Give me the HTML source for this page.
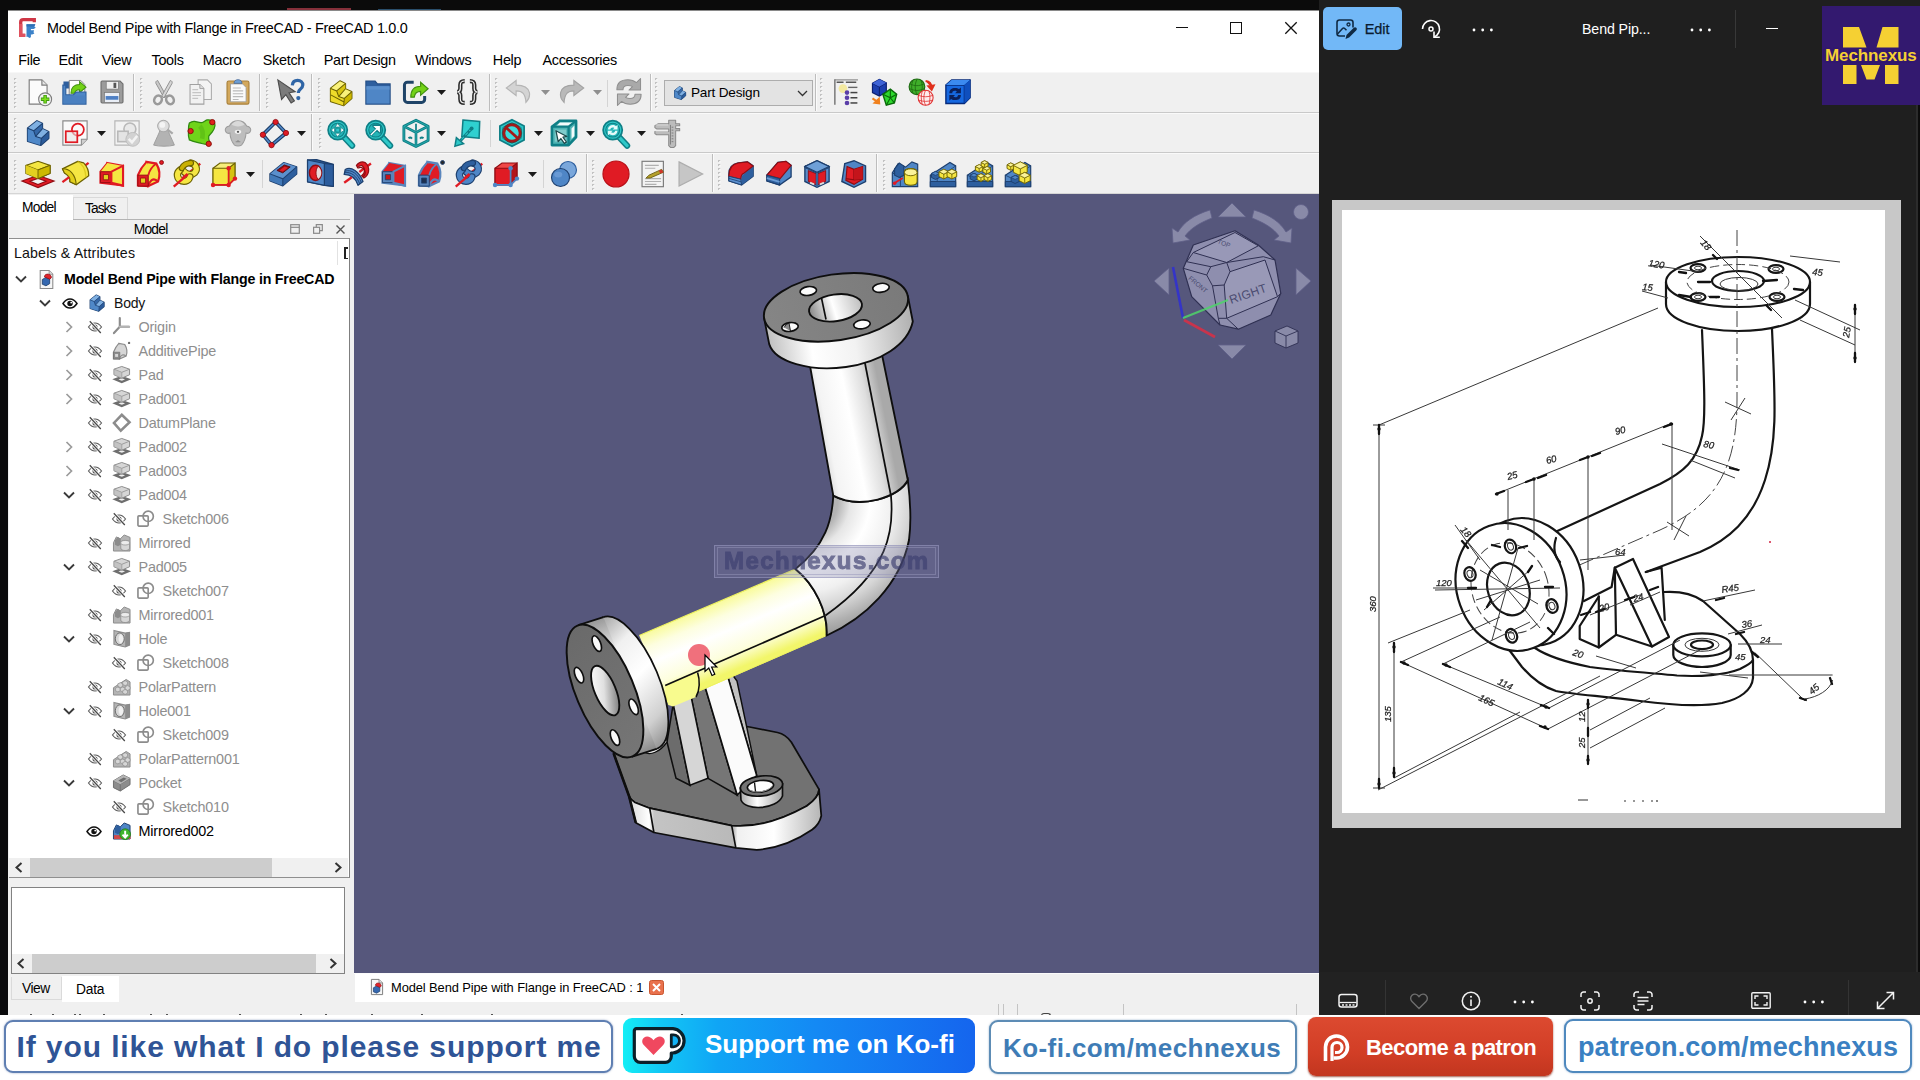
<!DOCTYPE html>
<html><head><meta charset="utf-8"><title>FreeCAD</title><style>
*{box-sizing:border-box;margin:0;padding:0}
html,body{width:1920px;height:1080px;overflow:hidden;background:#000}
body{font-family:"Liberation Sans",sans-serif;font-size:13.8px;color:#000;position:relative}
.a{position:absolute}
.t{position:absolute;white-space:nowrap;line-height:1}
svg{position:absolute;overflow:visible}
</style></head><body>
<div class="a" style="left:0px;top:0px;width:1319px;height:10px;background:#0b0b0b"></div>
<div class="a" style="left:287px;top:8px;width:64px;height:2.5px;background:#85303a"></div>
<div class="a" style="left:378px;top:8.5px;width:63px;height:2px;background:#2a4f6c"></div>
<div class="a" style="left:0px;top:10px;width:8px;height:1005px;background:#0a0a0c"></div>
<div class="a" style="left:8px;top:10px;width:1311px;height:1006px;background:#f0f0f0"></div>
<div class="a" style="left:8px;top:10px;width:1311px;height:1px;background:#8a8a8a"></div>
<div class="a" style="left:8px;top:11px;width:1311px;height:61px;background:#fff"></div>
<div class="a" style="left:8px;top:72px;width:1311px;height:1px;background:#f7f7f7"></div>
<div class="a" style="left:8px;top:112px;width:1311px;height:1px;background:#c9c9c9"></div>
<div class="a" style="left:8px;top:113px;width:1311px;height:1px;background:#fafafa"></div>
<div class="a" style="left:8px;top:152px;width:1311px;height:1px;background:#c9c9c9"></div>
<div class="a" style="left:8px;top:153px;width:1311px;height:1px;background:#fafafa"></div>
<div class="a" style="left:8px;top:193px;width:1311px;height:1px;background:#d5d5d5"></div>
<div class="t" style="left:47px;top:21px;font-size:14.4px;color:#000;font-weight:400;letter-spacing:-0.27px">Model Bend Pipe with Flange in FreeCAD - FreeCAD 1.0.0</div>
<svg style="left:18px;top:17px" width="20" height="21" viewBox="0 0 20 21"><path d="M16.300 5.200V2.600H5.200Q2.700 2.600 2.700 5.100V18.400H7.300" fill="none" stroke="#cf3746" stroke-width="3.300"/><path d="M2.700 7v11.400h4.500" fill="none" stroke="#e0525f" stroke-width="3.300"/><path d="M8.500 7.300h8.800l-1 2.200 1.500 1.200-2.200 1.300h-2.700v1.300h3.200l-.6 2 .9 1.300-2.300.9h-1.200v2.700l-1.700.8-1.300-1.200-1.400.3z" fill="#3b82c9"/><path d="M8.500 7.300h8.800l-1 2.200h-7.800z" fill="#2f6fb3"/></svg>
<div class="a" style="left:1176px;top:27px;width:12px;height:1.3px;background:#111"></div>
<div class="a" style="left:1230px;top:22px;width:12px;height:11.5px;border:1.4px solid #111"></div>
<svg style="left:1285px;top:22px" width="12" height="12" viewBox="0 0 12 12"><path d="M0.3 0.3L11.7 11.7M11.7 0.3L0.3 11.7" stroke="#111" stroke-width="1.3" fill="none"/></svg>
<div class="t" style="left:18.3px;top:52.6px;font-size:14.4px;color:#000;font-weight:400;letter-spacing:-0.3px">File</div>
<div class="t" style="left:58.5px;top:52.6px;font-size:14.4px;color:#000;font-weight:400;letter-spacing:-0.3px">Edit</div>
<div class="t" style="left:101.7px;top:52.6px;font-size:14.4px;color:#000;font-weight:400;letter-spacing:-0.3px">View</div>
<div class="t" style="left:151.5px;top:52.6px;font-size:14.4px;color:#000;font-weight:400;letter-spacing:-0.3px">Tools</div>
<div class="t" style="left:202.8px;top:52.6px;font-size:14.4px;color:#000;font-weight:400;letter-spacing:-0.3px">Macro</div>
<div class="t" style="left:262.8px;top:52.6px;font-size:14.4px;color:#000;font-weight:400;letter-spacing:-0.3px">Sketch</div>
<div class="t" style="left:323.8px;top:52.6px;font-size:14.4px;color:#000;font-weight:400;letter-spacing:-0.3px">Part Design</div>
<div class="t" style="left:415px;top:52.6px;font-size:14.4px;color:#000;font-weight:400;letter-spacing:-0.3px">Windows</div>
<div class="t" style="left:492.8px;top:52.6px;font-size:14.4px;color:#000;font-weight:400;letter-spacing:-0.3px">Help</div>
<div class="t" style="left:542.5px;top:52.6px;font-size:14.4px;color:#000;font-weight:400;letter-spacing:-0.3px">Accessories</div>
<svg style="left:14px;top:78px" width="4" height="30"><rect x="0" y="0" width="2.200" height="2" fill="#c2c2c2"/><rect x="1.200" y="1" width="1.500" height="1.500" fill="#fdfdfd"/><rect x="0" y="4" width="2.200" height="2" fill="#c2c2c2"/><rect x="1.200" y="5" width="1.500" height="1.500" fill="#fdfdfd"/><rect x="0" y="8" width="2.200" height="2" fill="#c2c2c2"/><rect x="1.200" y="9" width="1.500" height="1.500" fill="#fdfdfd"/><rect x="0" y="12" width="2.200" height="2" fill="#c2c2c2"/><rect x="1.200" y="13" width="1.500" height="1.500" fill="#fdfdfd"/><rect x="0" y="16" width="2.200" height="2" fill="#c2c2c2"/><rect x="1.200" y="17" width="1.500" height="1.500" fill="#fdfdfd"/><rect x="0" y="20" width="2.200" height="2" fill="#c2c2c2"/><rect x="1.200" y="21" width="1.500" height="1.500" fill="#fdfdfd"/><rect x="0" y="24" width="2.200" height="2" fill="#c2c2c2"/><rect x="1.200" y="25" width="1.500" height="1.500" fill="#fdfdfd"/><rect x="0" y="28" width="2.200" height="2" fill="#c2c2c2"/><rect x="1.200" y="29" width="1.500" height="1.500" fill="#fdfdfd"/></svg>
<svg style="left:140px;top:78px" width="4" height="30"><rect x="0" y="0" width="2.200" height="2" fill="#c2c2c2"/><rect x="1.200" y="1" width="1.500" height="1.500" fill="#fdfdfd"/><rect x="0" y="4" width="2.200" height="2" fill="#c2c2c2"/><rect x="1.200" y="5" width="1.500" height="1.500" fill="#fdfdfd"/><rect x="0" y="8" width="2.200" height="2" fill="#c2c2c2"/><rect x="1.200" y="9" width="1.500" height="1.500" fill="#fdfdfd"/><rect x="0" y="12" width="2.200" height="2" fill="#c2c2c2"/><rect x="1.200" y="13" width="1.500" height="1.500" fill="#fdfdfd"/><rect x="0" y="16" width="2.200" height="2" fill="#c2c2c2"/><rect x="1.200" y="17" width="1.500" height="1.500" fill="#fdfdfd"/><rect x="0" y="20" width="2.200" height="2" fill="#c2c2c2"/><rect x="1.200" y="21" width="1.500" height="1.500" fill="#fdfdfd"/><rect x="0" y="24" width="2.200" height="2" fill="#c2c2c2"/><rect x="1.200" y="25" width="1.500" height="1.500" fill="#fdfdfd"/><rect x="0" y="28" width="2.200" height="2" fill="#c2c2c2"/><rect x="1.200" y="29" width="1.500" height="1.500" fill="#fdfdfd"/></svg>
<svg style="left:266px;top:78px" width="4" height="30"><rect x="0" y="0" width="2.200" height="2" fill="#c2c2c2"/><rect x="1.200" y="1" width="1.500" height="1.500" fill="#fdfdfd"/><rect x="0" y="4" width="2.200" height="2" fill="#c2c2c2"/><rect x="1.200" y="5" width="1.500" height="1.500" fill="#fdfdfd"/><rect x="0" y="8" width="2.200" height="2" fill="#c2c2c2"/><rect x="1.200" y="9" width="1.500" height="1.500" fill="#fdfdfd"/><rect x="0" y="12" width="2.200" height="2" fill="#c2c2c2"/><rect x="1.200" y="13" width="1.500" height="1.500" fill="#fdfdfd"/><rect x="0" y="16" width="2.200" height="2" fill="#c2c2c2"/><rect x="1.200" y="17" width="1.500" height="1.500" fill="#fdfdfd"/><rect x="0" y="20" width="2.200" height="2" fill="#c2c2c2"/><rect x="1.200" y="21" width="1.500" height="1.500" fill="#fdfdfd"/><rect x="0" y="24" width="2.200" height="2" fill="#c2c2c2"/><rect x="1.200" y="25" width="1.500" height="1.500" fill="#fdfdfd"/><rect x="0" y="28" width="2.200" height="2" fill="#c2c2c2"/><rect x="1.200" y="29" width="1.500" height="1.500" fill="#fdfdfd"/></svg>
<svg style="left:318px;top:78px" width="4" height="30"><rect x="0" y="0" width="2.200" height="2" fill="#c2c2c2"/><rect x="1.200" y="1" width="1.500" height="1.500" fill="#fdfdfd"/><rect x="0" y="4" width="2.200" height="2" fill="#c2c2c2"/><rect x="1.200" y="5" width="1.500" height="1.500" fill="#fdfdfd"/><rect x="0" y="8" width="2.200" height="2" fill="#c2c2c2"/><rect x="1.200" y="9" width="1.500" height="1.500" fill="#fdfdfd"/><rect x="0" y="12" width="2.200" height="2" fill="#c2c2c2"/><rect x="1.200" y="13" width="1.500" height="1.500" fill="#fdfdfd"/><rect x="0" y="16" width="2.200" height="2" fill="#c2c2c2"/><rect x="1.200" y="17" width="1.500" height="1.500" fill="#fdfdfd"/><rect x="0" y="20" width="2.200" height="2" fill="#c2c2c2"/><rect x="1.200" y="21" width="1.500" height="1.500" fill="#fdfdfd"/><rect x="0" y="24" width="2.200" height="2" fill="#c2c2c2"/><rect x="1.200" y="25" width="1.500" height="1.500" fill="#fdfdfd"/><rect x="0" y="28" width="2.200" height="2" fill="#c2c2c2"/><rect x="1.200" y="29" width="1.500" height="1.500" fill="#fdfdfd"/></svg>
<svg style="left:495px;top:78px" width="4" height="30"><rect x="0" y="0" width="2.200" height="2" fill="#c2c2c2"/><rect x="1.200" y="1" width="1.500" height="1.500" fill="#fdfdfd"/><rect x="0" y="4" width="2.200" height="2" fill="#c2c2c2"/><rect x="1.200" y="5" width="1.500" height="1.500" fill="#fdfdfd"/><rect x="0" y="8" width="2.200" height="2" fill="#c2c2c2"/><rect x="1.200" y="9" width="1.500" height="1.500" fill="#fdfdfd"/><rect x="0" y="12" width="2.200" height="2" fill="#c2c2c2"/><rect x="1.200" y="13" width="1.500" height="1.500" fill="#fdfdfd"/><rect x="0" y="16" width="2.200" height="2" fill="#c2c2c2"/><rect x="1.200" y="17" width="1.500" height="1.500" fill="#fdfdfd"/><rect x="0" y="20" width="2.200" height="2" fill="#c2c2c2"/><rect x="1.200" y="21" width="1.500" height="1.500" fill="#fdfdfd"/><rect x="0" y="24" width="2.200" height="2" fill="#c2c2c2"/><rect x="1.200" y="25" width="1.500" height="1.500" fill="#fdfdfd"/><rect x="0" y="28" width="2.200" height="2" fill="#c2c2c2"/><rect x="1.200" y="29" width="1.500" height="1.500" fill="#fdfdfd"/></svg>
<svg style="left:655px;top:78px" width="4" height="30"><rect x="0" y="0" width="2.200" height="2" fill="#c2c2c2"/><rect x="1.200" y="1" width="1.500" height="1.500" fill="#fdfdfd"/><rect x="0" y="4" width="2.200" height="2" fill="#c2c2c2"/><rect x="1.200" y="5" width="1.500" height="1.500" fill="#fdfdfd"/><rect x="0" y="8" width="2.200" height="2" fill="#c2c2c2"/><rect x="1.200" y="9" width="1.500" height="1.500" fill="#fdfdfd"/><rect x="0" y="12" width="2.200" height="2" fill="#c2c2c2"/><rect x="1.200" y="13" width="1.500" height="1.500" fill="#fdfdfd"/><rect x="0" y="16" width="2.200" height="2" fill="#c2c2c2"/><rect x="1.200" y="17" width="1.500" height="1.500" fill="#fdfdfd"/><rect x="0" y="20" width="2.200" height="2" fill="#c2c2c2"/><rect x="1.200" y="21" width="1.500" height="1.500" fill="#fdfdfd"/><rect x="0" y="24" width="2.200" height="2" fill="#c2c2c2"/><rect x="1.200" y="25" width="1.500" height="1.500" fill="#fdfdfd"/><rect x="0" y="28" width="2.200" height="2" fill="#c2c2c2"/><rect x="1.200" y="29" width="1.500" height="1.500" fill="#fdfdfd"/></svg>
<svg style="left:820px;top:78px" width="4" height="30"><rect x="0" y="0" width="2.200" height="2" fill="#c2c2c2"/><rect x="1.200" y="1" width="1.500" height="1.500" fill="#fdfdfd"/><rect x="0" y="4" width="2.200" height="2" fill="#c2c2c2"/><rect x="1.200" y="5" width="1.500" height="1.500" fill="#fdfdfd"/><rect x="0" y="8" width="2.200" height="2" fill="#c2c2c2"/><rect x="1.200" y="9" width="1.500" height="1.500" fill="#fdfdfd"/><rect x="0" y="12" width="2.200" height="2" fill="#c2c2c2"/><rect x="1.200" y="13" width="1.500" height="1.500" fill="#fdfdfd"/><rect x="0" y="16" width="2.200" height="2" fill="#c2c2c2"/><rect x="1.200" y="17" width="1.500" height="1.500" fill="#fdfdfd"/><rect x="0" y="20" width="2.200" height="2" fill="#c2c2c2"/><rect x="1.200" y="21" width="1.500" height="1.500" fill="#fdfdfd"/><rect x="0" y="24" width="2.200" height="2" fill="#c2c2c2"/><rect x="1.200" y="25" width="1.500" height="1.500" fill="#fdfdfd"/><rect x="0" y="28" width="2.200" height="2" fill="#c2c2c2"/><rect x="1.200" y="29" width="1.500" height="1.500" fill="#fdfdfd"/></svg>
<div class="a" style="left:133px;top:74px;width:1px;height:37px;background:#bdbdbd"></div><div class="a" style="left:134px;top:74px;width:1px;height:37px;background:#fbfbfb"></div>
<div class="a" style="left:259px;top:74px;width:1px;height:37px;background:#bdbdbd"></div><div class="a" style="left:260px;top:74px;width:1px;height:37px;background:#fbfbfb"></div>
<div class="a" style="left:311px;top:74px;width:1px;height:37px;background:#bdbdbd"></div><div class="a" style="left:312px;top:74px;width:1px;height:37px;background:#fbfbfb"></div>
<div class="a" style="left:489px;top:74px;width:1px;height:37px;background:#bdbdbd"></div><div class="a" style="left:490px;top:74px;width:1px;height:37px;background:#fbfbfb"></div>
<div class="a" style="left:650px;top:74px;width:1px;height:37px;background:#bdbdbd"></div><div class="a" style="left:651px;top:74px;width:1px;height:37px;background:#fbfbfb"></div>
<div class="a" style="left:815px;top:74px;width:1px;height:37px;background:#bdbdbd"></div><div class="a" style="left:816px;top:74px;width:1px;height:37px;background:#fbfbfb"></div>
<div class="a" style="left:607px;top:80px;width:1px;height:27px;background:#d4d4d4"></div>
<svg style="left:24.0px;top:77.4px" width="30" height="30" viewBox="0 0 26 26"><path d="M4.5 2.5h11l4.5 4.5v16.5h-15.5z" fill="#fbfbfb" stroke="#7d7d7d" stroke-width="1"/>
<path d="M15.5 2.5v4.5h4.5" fill="#e4e4e4" stroke="#7d7d7d" stroke-width="1"/>
<circle cx="18.3" cy="19.3" r="5.6" fill="#f4f4f4" stroke="#7d7d7d" stroke-width="1"/>
<path d="M18.3 15.6v7.4M14.6 19.3h7.4" stroke="#3f9a10" stroke-width="3"/><path d="M18.3 16.2v6.2M15.2 19.3h6.2" stroke="#7fe01e" stroke-width="1.4"/></svg>
<svg style="left:60.0px;top:77.4px" width="30" height="30" viewBox="0 0 26 26"><path d="M3 4h6l1.5 2v4h-7.5z" fill="#2e5f9e"/>
<path d="M8 3h10l3.5 3.5v10h-13.5z" fill="#fdfdfd" stroke="#7d7d7d" stroke-width=".8"/>
<path d="M9.5 14c0-5 3-7.5 7.5-7.5v-2.5l5.5 4.8-5.5 4.8v-2.6c-2.5 0-4 1-4.3 3z" fill="#73d216" stroke="#3f8f0d" stroke-width=".9"/>
<path d="M2.5 7v16.5h20v-10.5h-8.5l-2.5 2.5h-6.5v-8.5z" fill="#4f86c6" stroke="#2e5f9e" stroke-width="1"/>
<path d="M3 16h19v7h-19z" fill="#4a80c0"/></svg>
<svg style="left:97.0px;top:77.4px" width="30" height="30" viewBox="0 0 26 26"><path d="M3.5 4.5a1 1 0 0 1 1-1h15.5l2.5 2.5v15.5a1 1 0 0 1-1 1h-17a1 1 0 0 1-1-1z" fill="#9b9b9b" stroke="#6e6e6e" stroke-width="1"/>
<rect x="8" y="4" width="10.5" height="6.5" fill="#efefef" stroke="#777" stroke-width=".6"/><rect x="14.3" y="5" width="2.4" height="4.5" fill="#555"/>
<rect x="6.5" y="13.5" width="13" height="8.5" fill="#e9eef6" stroke="#777" stroke-width=".6"/>
<rect x="7.5" y="16.5" width="11" height="3.2" fill="#4d7fc4"/></svg>
<svg style="left:149.0px;top:77.4px" width="30" height="30" viewBox="0 0 26 26"><path d="M7.5 3l7.5 13.5-2 1.5-7-12.5c-.4-1.2.2-2.2 1.5-2.500z" fill="#c9c9c9" stroke="#8c8c8c" stroke-width=".8"/>
<path d="M18.500 3l-7.500 13.500 2 1.500 7-12.500c.4-1.200-.2-2.200-1.500-2.500z" fill="#d6d6d6" stroke="#8c8c8c" stroke-width=".8"/>
<ellipse cx="7.800" cy="19.800" rx="3.200" ry="3.800" transform="rotate(25 7.800 19.800)" fill="none" stroke="#9a9a9a" stroke-width="2.200"/>
<ellipse cx="18.200" cy="19.800" rx="3.200" ry="3.800" transform="rotate(-25 18.200 19.800)" fill="none" stroke="#9a9a9a" stroke-width="2.200"/></svg>
<svg style="left:186.0px;top:77.4px" width="30" height="30" viewBox="0 0 26 26"><path d="M10.500 2.500h8l3.500 3.500v13.500h-11.500z" fill="#f4f4f4" stroke="#ababab" stroke-width=".9"/>
<path d="M3.500 6.500h8.500l3.500 3.500v13.500h-12z" fill="#f1f1f1" stroke="#a0a0a0" stroke-width=".9"/><path d="M12 6.500v3.500h3.500" fill="#ddd" stroke="#a0a0a0" stroke-width=".8"/>
<path d="M5.500 11h5M5.500 13.500h7.500M5.500 16h7.500M5.500 18.500h5" stroke="#c5c5c5" stroke-width="1"/></svg>
<svg style="left:223.0px;top:77.4px" width="30" height="30" viewBox="0 0 26 26"><rect x="3.500" y="3.500" width="19" height="20" rx="1.500" fill="#d3a85c" stroke="#a9803a" stroke-width="1"/>
<path d="M6.500 6h10.500l3 3v12.500h-13.500z" fill="#fafafa" stroke="#9c9c9c" stroke-width=".7"/>
<path d="M9.500 5.500c0-2 1.500-3.200 3.500-3.200s3.500 1.200 3.500 3.200z" fill="#6d9fd6" stroke="#46699a" stroke-width=".7"/>
<path d="M8.500 9.500h7M8.500 12h9M8.500 14.500h9M8.500 17h9M8.500 19.500h5" stroke="#b9b9b9" stroke-width="1"/></svg>
<svg style="left:275.0px;top:77.4px" width="30" height="30" viewBox="0 0 26 26"><path d="M2.500 2.500l3.200 17 3.700-4.200 4.600 7.200 2.800-1.800-4.600-7 5.300-1z" fill="#7b7b7b" stroke="#4c4c4c" stroke-width="1"/>
<path d="M15 7.200c.3-2.800 2.300-4.200 4.600-4.200 2.600 0 4.500 1.600 4.500 4 0 2-1.200 2.900-2.400 3.800-1 .8-1.500 1.400-1.500 3" fill="none" stroke="#2f65a6" stroke-width="2.800"/>
<circle cx="20.200" cy="18.300" r="1.800" fill="#2f65a6"/></svg>
<svg style="left:326.0px;top:77.4px" width="30" height="30" viewBox="0 0 26 26"><g transform="translate(0 1)"><path d="M4.100 8.900L12.100 2.600 16.700 4.800V9.400L22.200 11.900V17.600L15.300 23.600 4.100 20.100z" fill="#f5e642" stroke="#6b6000" stroke-width="1.500" stroke-linejoin="round"/>
<path d="M4.100 8.900L12.100 2.600 16.700 4.800 9.300 11.100z" fill="#f9f17a"/><path d="M9.300 11.100L16.700 4.800V9.400L11 16z" fill="#d9c510"/>
<path d="M11 16L16.700 9.400 22.200 11.900 15.900 17.600z" fill="#f9f17a"/><path d="M15.900 17.600L22.200 11.900V17.600L15.300 23.600z" fill="#cdb800"/>
<path d="M4.100 8.900L9.300 11.100 11 16 15.900 17.600 15.300 23.600 4.100 20.100z" fill="#eedb2a"/>
<path d="M4.100 8.900L9.300 11.100 11 16 15.900 17.600 22.200 11.900M9.300 11.100L16.700 4.800M11 16L16.700 9.400M15.900 17.600L15.300 23.600M4.100 14.500L15.600 20.600" fill="none" stroke="#6b6000" stroke-width=".9" stroke-linejoin="round"/></g></svg>
<svg style="left:363.0px;top:77.4px" width="30" height="30" viewBox="0 0 26 26"><path d="M2.500 3.500h8l2 2.500h11v17.500h-21z" fill="#2e5f9e" stroke="#254f86" stroke-width="1"/>
<path d="M3 8h20v15h-20z" fill="#4f86c6"/><path d="M3 8h20v3h-20z" fill="#5b90cd"/></svg>
<svg style="left:401.0px;top:77.4px" width="30" height="30" viewBox="0 0 26 26"><path d="M11 4.500h-5.500a2.500 2.500 0 0 0-2.500 2.500v12.500a2.500 2.500 0 0 0 2.500 2.500h12.500a2.500 2.500 0 0 0 2.500-2.500v-3" fill="none" stroke="#1f4468" stroke-width="2.600"/>
<path d="M8.500 17.500c0-6 3.200-9.500 8.500-9.500v-3.500l6.500 5.700-6.500 5.700v-3.500c-3.200 0-5 1.300-5.500 5.100z" fill="#73d216" stroke="#3f8f0d" stroke-width="1"/></svg>
<svg style="left:452.0px;top:77.4px" width="30" height="30" viewBox="0 0 26 26"><path d="M11 3.500c-3 0-3.800 1-3.800 3.500v3c0 1.800-.8 2.700-2.400 3 1.600.3 2.400 1.200 2.400 3v3c0 2.500.8 3.500 3.800 3.500M15.500 3.500c3 0 3.800 1 3.800 3.500v3c0 1.800.8 2.700 2.400 3-1.600.3-2.400 1.200-2.400 3v3c0 2.500-.8 3.500-3.800 3.500" fill="none" stroke="#2b2b2b" stroke-width="3.700"/><path d="M11 3.500c-3 0-3.800 1-3.800 3.500v3c0 1.800-.8 2.700-2.400 3 1.600.3 2.400 1.200 2.400 3v3c0 2.500.8 3.500 3.800 3.500M15.500 3.500c3 0 3.800 1 3.800 3.500v3c0 1.800.8 2.700 2.400 3-1.600.3-2.400 1.200-2.400 3v3c0 2.500-.8 3.500-3.800 3.500" fill="none" stroke="#f4f4f4" stroke-width="1"/></svg>
<svg style="left:504.0px;top:77.4px" width="30" height="30" viewBox="0 0 26 26"><path d="M10.500 3l-8.500 6.500 8.500 6.500v-4c5.500 0 8 2.500 8.500 10 3-3 3.500-6 3-8.500-1-4.500-5-6.500-11.500-6.500z" fill="#d4d4d4" stroke="#b5b5b5" stroke-width="1"/></svg>
<svg style="left:556.0px;top:77.4px" width="30" height="30" viewBox="0 0 26 26"><path d="M15.500 3l8.500 6.500-8.500 6.500v-4c-5.500 0-8 2.500-8.500 10-3-3-3.500-6-3-8.500 1-4.500 5-6.500 11.500-6.500z" fill="#b9b9b9" stroke="#a3a3a3" stroke-width="1"/></svg>
<svg style="left:614.0px;top:77.4px" width="30" height="30" viewBox="0 0 26 26"><path d="M2.500 11C2.500 5.300 6.300 2.400 12 2.400 15 2.400 17.500 3.200 19.400 4.800L23 1.300V11.300H13L16 8.300C15 7.600 13.700 7.300 12 7.300 9.300 7.300 7.800 8.600 7.800 11Z" fill="#a9a9a9" stroke="#8f8f8f" stroke-width=".9" stroke-linejoin="round"/><path d="M2.500 11C2.500 5.300 6.300 2.400 12 2.400 15 2.400 17.500 3.200 19.400 4.800L23 1.300V11.300H13L16 8.300C15 7.600 13.700 7.300 12 7.300 9.300 7.300 7.800 8.600 7.800 11Z" transform="rotate(180 13 13)" fill="#b9b9b9" stroke="#8f8f8f" stroke-width=".9" stroke-linejoin="round"/></svg>
<svg style="left:832.0px;top:77.4px" width="30" height="30" viewBox="0 0 26 26"><path d="M2.500 2v22" stroke="#555" stroke-width="1"/><path d="M2.500 2.500h20" stroke="#888" stroke-width="1"/>
<path d="M4 4.500h6M12 4.500h9" stroke="#555" stroke-width="1.200"/>
<circle cx="9.500" cy="10" r="3.800" fill="#f3e9a0"/><path d="M14 9h8" stroke="#666" stroke-width="1.200"/>
<circle cx="13" cy="13.500" r="2" fill="#5a3ea8"/><path d="M16 13.500h6" stroke="#444" stroke-width="1.300"/>
<circle cx="13" cy="18" r="2" fill="#5a3ea8"/><path d="M16 18h6" stroke="#444" stroke-width="1.300"/>
<circle cx="13" cy="22.500" r="2" fill="#5a3ea8"/><path d="M16 22.500h6" stroke="#444" stroke-width="1.300"/></svg>
<svg style="left:869.0px;top:77.4px" width="30" height="30" viewBox="0 0 26 26"><path d="M3 5.500l6-3.500 6 3 0 8-6 3.500-6-3z" fill="#1c3fb0" stroke="#0b1f70" stroke-width="1"/><path d="M3 5.500l6 3 6-3.500M9 8.500v8" fill="none" stroke="#0b1f70" stroke-width=".9"/><path d="M3 5.500l6-3.500 6 3-6 3.500z" fill="#3e63d6"/>
<path d="M12 15l6.500-4.500 5.500 4.500-2 7.500-7 2z" fill="#2fd82f" stroke="#0a6a0a" stroke-width="1.200"/><path d="M12 15l6.500 3 5.500-3M18.500 18l-3.500 6.500M18.500 18l3.500 4.500M18.500 10.500v7.500" fill="none" stroke="#0a6a0a" stroke-width="1"/>
<path d="M3 18.500l5 3.500M8.500 19l.3 3.800-3.800-.5z" stroke="#f0801c" stroke-width="1.800" fill="#f0801c"/></svg>
<svg style="left:906.0px;top:77.4px" width="30" height="30" viewBox="0 0 26 26"><circle cx="9.500" cy="8.500" r="6.800" fill="#3fae2a" stroke="#1e6a12" stroke-width="1"/><path d="M3.500 6c4 2 8 2 12 0M3 10c4.500 2.200 8.500 2.200 13 0M9.500 2c-2 4-2 9 0 13M6 3c-1.500 3.500-1.500 7.500 0 11M13 3c1.500 3.500 1.500 7.500 0 11" fill="none" stroke="#1e6a12" stroke-width=".7"/>
<circle cx="17" cy="18" r="6.500" fill="#fdecec" stroke="#e03030" stroke-width=".9"/><path d="M11 16c4 1.500 8 1.500 12 0M10.800 20c4.200 1.500 8.200 1.500 12.400 0M17 11.500c-2 4-2 9 0 13M14 12.500c-1 3.500-1 7.500 0 11M20 12.500c1 3.500 1 7.500 0 11" fill="none" stroke="#e03030" stroke-width=".7"/>
<path d="M17 3.500c3.500.5 5 2.500 5 5.500M19.500 8l2.700 3 1.800-3.600z" fill="#e0301c" stroke="#e0301c" stroke-width="1.800"/></svg>
<svg style="left:943.0px;top:77.4px" width="30" height="30" viewBox="0 0 26 26"><path d="M2.500 7l5-4.500h16v15.500l-5 5h-16z" fill="#1668e0" stroke="#062a7a" stroke-width="1.200"/>
<path d="M2.500 7h16v16M18.500 7l5-4.500" fill="none" stroke="#062a7a" stroke-width="1.100"/><path d="M2.500 7l5-4.500h16l-5 4.500z" fill="#3b8af0"/><path d="M18.500 7l5-4.500v15.500l-5 5z" fill="#0f4fbe"/>
<path d="M5.500 14c0-3 2-4.500 5-4.500 1.500 0 2.500.3 3.500 1l1.500-1.500v5h-5l1.500-1.500c-.5-.4-1-.5-1.700-.5-1.300 0-2.300.7-2.300 2zM15.500 15.500c0 3-2 4.500-5 4.500-1.500 0-2.500-.3-3.500-1l-1.500 1.500v-5h5l-1.500 1.500c.5.400 1 .5 1.700.5 1.300 0 2.300-.7 2.300-2z" fill="#0a1f5a"/></svg>
<svg style="left:436.5px;top:89.9px" width="9" height="5" viewBox="0 0 9 5"><path d="M0 0h9l-4.500 5z" fill="#1a1a1a"/></svg>
<svg style="left:540.5px;top:89.9px" width="9" height="5" viewBox="0 0 9 5"><path d="M0 0h9l-4.500 5z" fill="#8f8f8f"/></svg>
<svg style="left:592.5px;top:89.9px" width="9" height="5" viewBox="0 0 9 5"><path d="M0 0h9l-4.500 5z" fill="#8f8f8f"/></svg>
<div class="a" style="left:664px;top:80px;width:149px;height:26px;background:#e3e3e3;border:1px solid #adadad"></div>
<svg style="left:672.0px;top:85.0px" width="16" height="16" viewBox="0 0 26 26"><path d="M4.100 8.900L12.100 2.600 16.700 4.800V9.400L22.200 11.900V17.600L15.300 23.600 4.100 20.100z" fill="#4a80c0" stroke="#1d3f6e" stroke-width="1.500" stroke-linejoin="round"/>
<path d="M4.100 8.900L12.100 2.600 16.700 4.800 9.300 11.100z" fill="#7fb0e2"/><path d="M9.300 11.100L16.700 4.800V9.400L11 16z" fill="#3568a8"/>
<path d="M11 16L16.700 9.400 22.200 11.900 15.900 17.600z" fill="#7fb0e2"/><path d="M15.900 17.600L22.200 11.900V17.600L15.300 23.600z" fill="#2b5b9a"/>
<path d="M4.100 8.900L9.300 11.100 11 16 15.900 17.600 15.300 23.600 4.100 20.100z" fill="#4f88c8"/>
<path d="M4.100 8.900L9.300 11.100 11 16 15.900 17.600 22.200 11.900M9.300 11.100L16.700 4.800M11 16L16.700 9.400M15.900 17.600L15.300 23.600" fill="none" stroke="#1d3f6e" stroke-width=".9" stroke-linejoin="round"/></svg>
<div class="t" style="left:691px;top:86px;font-size:13.6px;color:#000;font-weight:400;letter-spacing:-0.2px">Part Design</div>
<svg style="left:797px;top:90px" width="11" height="7" viewBox="0 0 11 7"><path d="M1 1l4.500 4.500 4.500-4.500" fill="none" stroke="#333" stroke-width="1.300"/></svg>
<svg style="left:14px;top:118px" width="4" height="30"><rect x="0" y="0" width="2.200" height="2" fill="#c2c2c2"/><rect x="1.200" y="1" width="1.500" height="1.500" fill="#fdfdfd"/><rect x="0" y="4" width="2.200" height="2" fill="#c2c2c2"/><rect x="1.200" y="5" width="1.500" height="1.500" fill="#fdfdfd"/><rect x="0" y="8" width="2.200" height="2" fill="#c2c2c2"/><rect x="1.200" y="9" width="1.500" height="1.500" fill="#fdfdfd"/><rect x="0" y="12" width="2.200" height="2" fill="#c2c2c2"/><rect x="1.200" y="13" width="1.500" height="1.500" fill="#fdfdfd"/><rect x="0" y="16" width="2.200" height="2" fill="#c2c2c2"/><rect x="1.200" y="17" width="1.500" height="1.500" fill="#fdfdfd"/><rect x="0" y="20" width="2.200" height="2" fill="#c2c2c2"/><rect x="1.200" y="21" width="1.500" height="1.500" fill="#fdfdfd"/><rect x="0" y="24" width="2.200" height="2" fill="#c2c2c2"/><rect x="1.200" y="25" width="1.500" height="1.500" fill="#fdfdfd"/><rect x="0" y="28" width="2.200" height="2" fill="#c2c2c2"/><rect x="1.200" y="29" width="1.500" height="1.500" fill="#fdfdfd"/></svg>
<svg style="left:319px;top:118px" width="4" height="30"><rect x="0" y="0" width="2.200" height="2" fill="#c2c2c2"/><rect x="1.200" y="1" width="1.500" height="1.500" fill="#fdfdfd"/><rect x="0" y="4" width="2.200" height="2" fill="#c2c2c2"/><rect x="1.200" y="5" width="1.500" height="1.500" fill="#fdfdfd"/><rect x="0" y="8" width="2.200" height="2" fill="#c2c2c2"/><rect x="1.200" y="9" width="1.500" height="1.500" fill="#fdfdfd"/><rect x="0" y="12" width="2.200" height="2" fill="#c2c2c2"/><rect x="1.200" y="13" width="1.500" height="1.500" fill="#fdfdfd"/><rect x="0" y="16" width="2.200" height="2" fill="#c2c2c2"/><rect x="1.200" y="17" width="1.500" height="1.500" fill="#fdfdfd"/><rect x="0" y="20" width="2.200" height="2" fill="#c2c2c2"/><rect x="1.200" y="21" width="1.500" height="1.500" fill="#fdfdfd"/><rect x="0" y="24" width="2.200" height="2" fill="#c2c2c2"/><rect x="1.200" y="25" width="1.500" height="1.500" fill="#fdfdfd"/><rect x="0" y="28" width="2.200" height="2" fill="#c2c2c2"/><rect x="1.200" y="29" width="1.500" height="1.500" fill="#fdfdfd"/></svg>
<div class="a" style="left:311px;top:114px;width:1px;height:37px;background:#bdbdbd"></div><div class="a" style="left:312px;top:114px;width:1px;height:37px;background:#fbfbfb"></div>
<div class="a" style="left:490px;top:120px;width:1px;height:27px;background:#d4d4d4"></div>
<svg style="left:23.0px;top:118.0px" width="30" height="30" viewBox="0 0 26 26"><path d="M4.100 8.900L12.100 2.600 16.700 4.800V9.400L22.200 11.900V17.600L15.300 23.600 4.100 20.100z" fill="#4a80c0" stroke="#1d3f6e" stroke-width="1.500" stroke-linejoin="round"/>
<path d="M4.100 8.900L12.100 2.600 16.700 4.800 9.300 11.100z" fill="#7fb0e2"/><path d="M9.300 11.100L16.700 4.800V9.400L11 16z" fill="#3568a8"/>
<path d="M11 16L16.700 9.400 22.200 11.900 15.900 17.600z" fill="#7fb0e2"/><path d="M15.900 17.600L22.200 11.900V17.600L15.300 23.600z" fill="#2b5b9a"/>
<path d="M4.100 8.900L9.300 11.100 11 16 15.900 17.600 15.300 23.600 4.100 20.100z" fill="#4f88c8"/>
<path d="M4.100 8.900L9.300 11.100 11 16 15.900 17.600 22.200 11.900M9.300 11.100L16.700 4.800M11 16L16.700 9.400M15.900 17.600L15.300 23.600" fill="none" stroke="#1d3f6e" stroke-width=".9" stroke-linejoin="round"/></svg>
<svg style="left:60.0px;top:118.0px" width="30" height="30" viewBox="0 0 26 26"><path d="M2.500 2.500h21v16l-5 5h-16z" fill="#fafafa" stroke="#8a8a8a" stroke-width="1"/><path d="M23.500 18.500h-5v5" fill="#cfcfcf" stroke="#8a8a8a" stroke-width=".9"/>
<circle cx="15.500" cy="10" r="5.200" fill="none" stroke="#e01b24" stroke-width="1.500"/><rect x="5" y="11.500" width="10" height="9.500" fill="#e6e6e6" fill-opacity=".6" stroke="#e01b24" stroke-width="1.500"/></svg>
<svg style="left:112.0px;top:118.0px" width="30" height="30" viewBox="0 0 26 26"><path d="M2.500 2.500h21v16l-5 5h-16z" fill="#f2f2f2" stroke="#b5b5b5" stroke-width="1"/>
<circle cx="15.500" cy="9.500" r="5.200" fill="#e9e9e9" stroke="#b9b9b9" stroke-width="1.400"/><rect x="5" y="11.500" width="9" height="9" fill="#e4e4e4" stroke="#b9b9b9" stroke-width="1.400"/>
<circle cx="18" cy="18.500" r="6" fill="#d2d2d2" stroke="#bdbdbd" stroke-width=".8"/><path d="M14.500 18l2.800 3 4.500-5.500" fill="none" stroke="#f3f3f3" stroke-width="2.200"/></svg>
<svg style="left:149.0px;top:118.0px" width="30" height="30" viewBox="0 0 26 26"><path d="M4 23.500c2-5 4.500-9.500 6-14h6c1.500 4.500 4 9 6 14-5 1.300-13 1.300-18 0z" fill="#b3b3b3" stroke="#9b9b9b" stroke-width=".8"/>
<circle cx="12.500" cy="7" r="5" fill="#dedede" stroke="#a9a9a9" stroke-width=".9"/><circle cx="11.500" cy="6" r="2.500" fill="#f4f4f4"/><path d="M16 10l4.500 3.500" stroke="#a9a9a9" stroke-width="2"/></svg>
<svg style="left:186.0px;top:118.0px" width="30" height="30" viewBox="0 0 26 26"><path d="M2.900 4.400C4.500 3.200 6 2.700 7.500 2.900 9.500 3.300 11.500 4.300 13.600 4 15.500 3.600 16.500 2.200 18.200 1.700 20 1.400 22 1.800 23.600 2.900 24.800 3.900 25.300 5.200 25.100 6.700 24.800 8.800 24 10.500 22.800 12.100 21.800 13.400 20.300 14.300 19.700 15.900 19 18 20.500 20.500 21.300 22.800 18.800 23.300 16 22.800 13.600 22.100 10 21.200 6.300 20.500 2.900 19 2.200 16.800 1.900 14.500 2.100 12.100 2.200 9.500 2 6.800 2.900 4.400z" fill="#6fd41a" stroke="#2f8a10" stroke-width="1.100"/>
<path d="M12 7c2.500 2.500 3 6 2 11" fill="none" stroke="#4fae12" stroke-width="4" opacity=".45"/>
<circle cx="22.800" cy="3.600" r="2.300" fill="#e0241c" stroke="#8a0c0c" stroke-width=".8"/><circle cx="4" cy="11.300" r="2.300" fill="#e0241c" stroke="#8a0c0c" stroke-width=".8"/><circle cx="19.700" cy="22.400" r="2.300" fill="#e0241c" stroke="#8a0c0c" stroke-width=".8"/></svg>
<svg style="left:223.0px;top:118.0px" width="30" height="30" viewBox="0 0 26 26"><path d="M2.500 12c-1.500-2 0-4.500 3-5 1.500-3 4.500-4.500 7.500-4.500s6 1.500 7.500 4.500c3 .5 4.500 3 3 5-1 1.300-2.500 1.500-3.500 1-.3 4-1.800 8-4 10.500-1.500 1-4.500 1-6 0-2.200-2.500-3.700-6.500-4-10.500-1 .5-2.500.3-3.500-1z" fill="#bdbdbd" stroke="#9c9c9c" stroke-width=".9"/>
<path d="M7.500 5.500c1.500-2 3.500-3 5.500-3s4 1 5.500 3c-1.500 2.500-9.500 2.500-11 0z" fill="#d9d9d9"/>
<ellipse cx="13" cy="12" rx="2.800" ry="1.800" fill="#f1f1f1"/><circle cx="13" cy="12" r="1" fill="#555"/><path d="M11 20.500h4M13 19v1.500" stroke="#8a8a8a" stroke-width=".9"/></svg>
<svg style="left:260.0px;top:118.0px" width="30" height="30" viewBox="0 0 26 26"><path d="M13.500 3.500l9 9.500-12.500 10.500-7.500-9z" fill="none" stroke="#1c3d66" stroke-width="3.200"/><path d="M13.500 3.500l9 9.500-12.500 10.500-7.500-9z" fill="none" stroke="#4f86c6" stroke-width="1.400"/>
<circle cx="13.500" cy="3.500" r="2.300" fill="#e01b24" stroke="#8f0c12" stroke-width=".7"/><circle cx="22.500" cy="13" r="2.300" fill="#e01b24" stroke="#8f0c12" stroke-width=".7"/><circle cx="10" cy="23.500" r="2.300" fill="#e01b24" stroke="#8f0c12" stroke-width=".7"/><circle cx="2.500" cy="14.500" r="2.300" fill="#e01b24" stroke="#8f0c12" stroke-width=".7"/></svg>
<svg style="left:325.0px;top:118.0px" width="30" height="30" viewBox="0 0 26 26"><path d="M16 16l7.500 8" stroke="#0f7f86" stroke-width="5.400" stroke-linecap="round"/><path d="M16.500 16.500l7 7.500" stroke="#2ec8c8" stroke-width="2.800" stroke-linecap="round"/>
<circle cx="11" cy="10.500" r="8.300" fill="#2ec8c8" stroke="#0f7f86" stroke-width="1.500"/><circle cx="11" cy="10.500" r="6" fill="#25b4b6" stroke="#0f7f86" stroke-width=".9"/><path d="M11 4.800l2.300 3h-4.600zM11 16.200l2.300-3h-4.600zM5.300 10.500l3-2.300v4.600zM16.700 10.500l-3-2.300v4.600z" fill="#fff" stroke="#0f7f86" stroke-width=".6"/><rect x="9.300" y="8.800" width="3.400" height="3.400" rx=".8" fill="#2ec8c8" stroke="#0f7f86" stroke-width=".7"/></svg>
<svg style="left:363.0px;top:118.0px" width="30" height="30" viewBox="0 0 26 26"><path d="M16 16l7.500 8" stroke="#0f7f86" stroke-width="5.400" stroke-linecap="round"/><path d="M16.500 16.500l7 7.500" stroke="#2ec8c8" stroke-width="2.800" stroke-linecap="round"/>
<circle cx="11" cy="10.500" r="8.300" fill="#2ec8c8" stroke="#0f7f86" stroke-width="1.500"/><circle cx="11" cy="10.500" r="6" fill="#25b4b6" stroke="#0f7f86" stroke-width=".9"/><path d="M6.500 15l5-5M9.300 6.800h5.400v5.400z" stroke="#0f7f86" stroke-width="2.600" stroke-linejoin="round" fill="#0f7f86"/><path d="M6.800 14.700l5-5M10.300 7.400h3.800v3.800z" stroke="#fff" stroke-width="1.100" fill="#fff"/></svg>
<svg style="left:401.0px;top:118.0px" width="30" height="30" viewBox="0 0 26 26"><path d="M13 2l10.500 5.200v12.300l-10.500 5.200-10.500-5.200v-12.300z" fill="none" stroke="#0f7f86" stroke-width="2.500" stroke-linejoin="round"/>
<path d="M2.500 7.200l10.500 5.300 10.500-5.300M13 12.500v12.200" fill="none" stroke="#0f7f86" stroke-width="2.300"/><path d="M13 2l10.500 5.200v12.300l-10.500 5.200-10.500-5.200v-12.300zM2.500 7.200l10.500 5.300 10.500-5.300M13 12.500v12.200" fill="none" stroke="#2fb9ba" stroke-width=".6"/>
<path d="M13 5v6" stroke="#0f7f86" stroke-width="1.500"/><path d="M6.500 17.500c1-.8 2-.8 3 .3M19.500 17.500c-1-.8-2-.8-3 .3" fill="none" stroke="#0f7f86" stroke-width="1.700"/></svg>
<svg style="left:452.0px;top:118.0px" width="30" height="30" viewBox="0 0 26 26"><path d="M9.500 1.800l14.500 1.200-.5 14.500-15-1.500z" fill="#2fd0d0" stroke="#0f7f86" stroke-width="1.300"/>
<path d="M17 9l-9.500 10.500" stroke="#0f7f86" stroke-width="2.600"/><path d="M17 9l-9.500 10.500" stroke="#2ec8c8" stroke-width=".9" stroke-dasharray="3 2"/><circle cx="17" cy="9" r="1.700" fill="#0f7f86"/>
<path d="M2.500 24.500l1.300-7.500 6.200 5.300z" fill="#2ec8c8" stroke="#0f7f86" stroke-width="1.300"/></svg>
<svg style="left:497.0px;top:118.0px" width="30" height="30" viewBox="0 0 26 26"><path d="M13 1.500l10.500 5.500v12l-10.500 5.500-10.500-5.500v-12z" fill="#2ec8c8" stroke="#0f7f86" stroke-width="1.500"/><path d="M13 4l8 4.300v9.400l-8 4.300-8-4.300v-9.400z" fill="#36cfd0" stroke="#0f7f86" stroke-width=".7"/>
<circle cx="13" cy="13" r="7" fill="#3fdcdc" stroke="#a31a1a" stroke-width="2.300"/><path d="M8 8.500l10 9" stroke="#a31a1a" stroke-width="2.300"/><circle cx="13" cy="13" r="8.400" fill="none" stroke="#5c1010" stroke-width=".5"/></svg>
<svg style="left:549.0px;top:118.0px" width="30" height="30" viewBox="0 0 26 26"><path d="M2.500 7.500l6.500-5h14.500v14l-6.500 7h-14.500z" fill="#4db3b3" stroke="#0f7f86" stroke-width="2.200" stroke-linejoin="round"/>
<path d="M9.500 4h11.500l-3.500 3h-11zM19.500 9l2.500-2.500v9l-2.500 2.800z" fill="#f3fbfb"/><path d="M5 10h10v10.500h-10z" fill="#7fcccc"/>
<path d="M2.500 7.500h14.500v16M17 7.500l6.500-5" fill="none" stroke="#0f7f86" stroke-width="2"/>
<path d="M6 11l2 9.500 2.300-2.700 3 4.200 1.800-1.200-3-4.200 3.400-.6z" fill="#fff" stroke="#1d4a4c" stroke-width="1.100" stroke-linejoin="round"/></svg>
<svg style="left:600.0px;top:118.0px" width="30" height="30" viewBox="0 0 26 26"><path d="M16 16l7.500 8" stroke="#0f7f86" stroke-width="5.400" stroke-linecap="round"/><path d="M16.500 16.500l7 7.500" stroke="#2ec8c8" stroke-width="2.800" stroke-linecap="round"/>
<circle cx="11" cy="10.500" r="8.300" fill="#2ec8c8" stroke="#0f7f86" stroke-width="1.500"/><circle cx="11" cy="10.500" r="6" fill="#25b4b6" stroke="#0f7f86" stroke-width=".9"/><path d="M6.800 10c.3-2.600 2.100-3.900 4.200-3.900 1.200 0 2.100.4 2.900 1l1.300-1.300v4.200h-4.200l1.400-1.400c-.4-.3-.9-.4-1.400-.4-1.100 0-1.900.6-2.100 1.800zM15.200 11c-.3 2.600-2.100 3.900-4.200 3.900-1.200 0-2.100-.4-2.900-1l-1.300 1.300v-4.200h4.200l-1.400 1.400c.4.300.9.400 1.400.4 1.100 0 1.900-.6 2.100-1.800z" fill="#e4fafa"/></svg>
<svg style="left:652.0px;top:118.0px" width="30" height="30" viewBox="0 0 26 26"><path d="M14.500 2h6v3h3.500v1.800h-3.500v2.400h3.500v1.800h-3.500v13l-1.500 1.500h-3l-1.500-1.500v-9.500h-10.500l-1.500-1v-1.800h12v-2.200h-10.500l-1.500-1.200v-1.600l3-1.800h9z" fill="#bcbcbc" stroke="#8a8a8a" stroke-width=".9" stroke-linejoin="round"/>
<path d="M16 6v17M18.500 8h-1.500M18.500 10.500h-1.500M18.500 13h-1.500M18.500 15.500h-1.500M18.500 18h-1.500M18.500 20.500h-1.500" stroke="#7a7a7a" stroke-width=".8"/><path d="M3 6h11M3 11.500h11" stroke="#dedede" stroke-width=".8"/></svg>
<svg style="left:96.5px;top:130.5px" width="9" height="5" viewBox="0 0 9 5"><path d="M0 0h9l-4.500 5z" fill="#1a1a1a"/></svg>
<svg style="left:296.5px;top:130.5px" width="9" height="5" viewBox="0 0 9 5"><path d="M0 0h9l-4.500 5z" fill="#1a1a1a"/></svg>
<svg style="left:436.5px;top:130.5px" width="9" height="5" viewBox="0 0 9 5"><path d="M0 0h9l-4.500 5z" fill="#1a1a1a"/></svg>
<svg style="left:533.5px;top:130.5px" width="9" height="5" viewBox="0 0 9 5"><path d="M0 0h9l-4.500 5z" fill="#1a1a1a"/></svg>
<svg style="left:585.5px;top:130.5px" width="9" height="5" viewBox="0 0 9 5"><path d="M0 0h9l-4.500 5z" fill="#1a1a1a"/></svg>
<svg style="left:636.5px;top:130.5px" width="9" height="5" viewBox="0 0 9 5"><path d="M0 0h9l-4.500 5z" fill="#1a1a1a"/></svg>
<svg style="left:14px;top:160px" width="4" height="30"><rect x="0" y="0" width="2.200" height="2" fill="#c2c2c2"/><rect x="1.200" y="1" width="1.500" height="1.500" fill="#fdfdfd"/><rect x="0" y="4" width="2.200" height="2" fill="#c2c2c2"/><rect x="1.200" y="5" width="1.500" height="1.500" fill="#fdfdfd"/><rect x="0" y="8" width="2.200" height="2" fill="#c2c2c2"/><rect x="1.200" y="9" width="1.500" height="1.500" fill="#fdfdfd"/><rect x="0" y="12" width="2.200" height="2" fill="#c2c2c2"/><rect x="1.200" y="13" width="1.500" height="1.500" fill="#fdfdfd"/><rect x="0" y="16" width="2.200" height="2" fill="#c2c2c2"/><rect x="1.200" y="17" width="1.500" height="1.500" fill="#fdfdfd"/><rect x="0" y="20" width="2.200" height="2" fill="#c2c2c2"/><rect x="1.200" y="21" width="1.500" height="1.500" fill="#fdfdfd"/><rect x="0" y="24" width="2.200" height="2" fill="#c2c2c2"/><rect x="1.200" y="25" width="1.500" height="1.500" fill="#fdfdfd"/><rect x="0" y="28" width="2.200" height="2" fill="#c2c2c2"/><rect x="1.200" y="29" width="1.500" height="1.500" fill="#fdfdfd"/></svg>
<svg style="left:592px;top:160px" width="4" height="30"><rect x="0" y="0" width="2.200" height="2" fill="#c2c2c2"/><rect x="1.200" y="1" width="1.500" height="1.500" fill="#fdfdfd"/><rect x="0" y="4" width="2.200" height="2" fill="#c2c2c2"/><rect x="1.200" y="5" width="1.500" height="1.500" fill="#fdfdfd"/><rect x="0" y="8" width="2.200" height="2" fill="#c2c2c2"/><rect x="1.200" y="9" width="1.500" height="1.500" fill="#fdfdfd"/><rect x="0" y="12" width="2.200" height="2" fill="#c2c2c2"/><rect x="1.200" y="13" width="1.500" height="1.500" fill="#fdfdfd"/><rect x="0" y="16" width="2.200" height="2" fill="#c2c2c2"/><rect x="1.200" y="17" width="1.500" height="1.500" fill="#fdfdfd"/><rect x="0" y="20" width="2.200" height="2" fill="#c2c2c2"/><rect x="1.200" y="21" width="1.500" height="1.500" fill="#fdfdfd"/><rect x="0" y="24" width="2.200" height="2" fill="#c2c2c2"/><rect x="1.200" y="25" width="1.500" height="1.500" fill="#fdfdfd"/><rect x="0" y="28" width="2.200" height="2" fill="#c2c2c2"/><rect x="1.200" y="29" width="1.500" height="1.500" fill="#fdfdfd"/></svg>
<svg style="left:718px;top:160px" width="4" height="30"><rect x="0" y="0" width="2.200" height="2" fill="#c2c2c2"/><rect x="1.200" y="1" width="1.500" height="1.500" fill="#fdfdfd"/><rect x="0" y="4" width="2.200" height="2" fill="#c2c2c2"/><rect x="1.200" y="5" width="1.500" height="1.500" fill="#fdfdfd"/><rect x="0" y="8" width="2.200" height="2" fill="#c2c2c2"/><rect x="1.200" y="9" width="1.500" height="1.500" fill="#fdfdfd"/><rect x="0" y="12" width="2.200" height="2" fill="#c2c2c2"/><rect x="1.200" y="13" width="1.500" height="1.500" fill="#fdfdfd"/><rect x="0" y="16" width="2.200" height="2" fill="#c2c2c2"/><rect x="1.200" y="17" width="1.500" height="1.500" fill="#fdfdfd"/><rect x="0" y="20" width="2.200" height="2" fill="#c2c2c2"/><rect x="1.200" y="21" width="1.500" height="1.500" fill="#fdfdfd"/><rect x="0" y="24" width="2.200" height="2" fill="#c2c2c2"/><rect x="1.200" y="25" width="1.500" height="1.500" fill="#fdfdfd"/><rect x="0" y="28" width="2.200" height="2" fill="#c2c2c2"/><rect x="1.200" y="29" width="1.500" height="1.500" fill="#fdfdfd"/></svg>
<svg style="left:883px;top:160px" width="4" height="30"><rect x="0" y="0" width="2.200" height="2" fill="#c2c2c2"/><rect x="1.200" y="1" width="1.500" height="1.500" fill="#fdfdfd"/><rect x="0" y="4" width="2.200" height="2" fill="#c2c2c2"/><rect x="1.200" y="5" width="1.500" height="1.500" fill="#fdfdfd"/><rect x="0" y="8" width="2.200" height="2" fill="#c2c2c2"/><rect x="1.200" y="9" width="1.500" height="1.500" fill="#fdfdfd"/><rect x="0" y="12" width="2.200" height="2" fill="#c2c2c2"/><rect x="1.200" y="13" width="1.500" height="1.500" fill="#fdfdfd"/><rect x="0" y="16" width="2.200" height="2" fill="#c2c2c2"/><rect x="1.200" y="17" width="1.500" height="1.500" fill="#fdfdfd"/><rect x="0" y="20" width="2.200" height="2" fill="#c2c2c2"/><rect x="1.200" y="21" width="1.500" height="1.500" fill="#fdfdfd"/><rect x="0" y="24" width="2.200" height="2" fill="#c2c2c2"/><rect x="1.200" y="25" width="1.500" height="1.500" fill="#fdfdfd"/><rect x="0" y="28" width="2.200" height="2" fill="#c2c2c2"/><rect x="1.200" y="29" width="1.500" height="1.500" fill="#fdfdfd"/></svg>
<div class="a" style="left:586px;top:154px;width:1px;height:38px;background:#bdbdbd"></div><div class="a" style="left:587px;top:154px;width:1px;height:38px;background:#fbfbfb"></div>
<div class="a" style="left:712px;top:154px;width:1px;height:38px;background:#bdbdbd"></div><div class="a" style="left:713px;top:154px;width:1px;height:38px;background:#fbfbfb"></div>
<div class="a" style="left:876px;top:154px;width:1px;height:38px;background:#bdbdbd"></div><div class="a" style="left:877px;top:154px;width:1px;height:38px;background:#fbfbfb"></div>
<div class="a" style="left:262px;top:160px;width:1px;height:28px;background:#d4d4d4"></div>
<div class="a" style="left:543px;top:160px;width:1px;height:28px;background:#d4d4d4"></div>
<svg style="left:23.0px;top:159.4px" width="30" height="30" viewBox="0 0 26 26"><path d="M13 15.500l10.500 3.700-10.500 4.300-10.500-4.300z" fill="none" stroke="#8f0c12" stroke-width="3.400"/><path d="M13 15.500l10.500 3.700-10.500 4.300-10.500-4.300z" fill="none" stroke="#e01b24" stroke-width="1.600"/>
<path d="M13 2l10.500 3.500v7l-10.500 4.500-10.500-4.500v-7z" fill="#f5e642" stroke="#6b6000" stroke-width="1"/><path d="M2.500 5.500l10.500 4 10.500-4M13 9.500v7.500" fill="none" stroke="#6b6000" stroke-width=".9"/>
<path d="M2.500 5.500l10.500 4v7.500l-10.500-4.500z" fill="#e3d020"/><path d="M23.500 5.500l-10.500 4v7.500l10.500-4.500z" fill="#cdb800" stroke="#6b6000" stroke-width=".8"/></svg>
<svg style="left:60.0px;top:159.4px" width="30" height="30" viewBox="0 0 26 26"><path d="M16 9.800L24.800 3.400" stroke="#e01b24" stroke-width="2"/>
<path d="M2.100 8.500L15.400 2.100 20.500 3.400C23.500 6.500 25 10.500 24.900 14.500L14.100 22.300 8.600 19.700C8.800 17.500 8.400 16.200 7.700 15.400 6.500 13.800 5 12.600 3.800 12z" fill="#f5e642" stroke="#6b6000" stroke-width="1.100" stroke-linejoin="round"/>
<path d="M2.100 8.500C8 8 13.500 13 14.100 22.300L8.600 19.700C8.800 17.500 8.400 16.200 7.700 15.400 6.500 13.800 5 12.600 3.800 12z" fill="#e2cf1c" stroke="#6b6000" stroke-width=".9" stroke-linejoin="round"/>
<path d="M15.400 2.100C19 4 22 8 22.500 16" fill="none" stroke="#d6c212" stroke-width="1.200" opacity=".7"/>
<path d="M2.100 20.100L8 15.700" stroke="#e01b24" stroke-width="2"/></svg>
<svg style="left:97.0px;top:159.4px" width="30" height="30" viewBox="0 0 26 26"><path d="M9 3.500l13.500 2.500v17l-13-3z" fill="#f5e642" stroke="#e01b24" stroke-width="2"/>
<path d="M9 3.500l-6 7.500v9.500l6.500-.5M3 11l19.500-5M3 20.500l19.500 2.500" fill="none" stroke="#e01b24" stroke-width="1.800"/>
<path d="M3 11l6-7.500 13.500 2.500-10 5z" fill="#f5e642"/><path d="M3 11h9.500v9.500h-9.500z" fill="#e01b24" stroke="#8f0c12" stroke-width=".8"/><path d="M5.500 13.500h4.500v4.500h-4.500z" fill="#e3d020" stroke="#8f0c12" stroke-width=".7"/>
<path d="M12.500 11l10-5v17l-10-2.500z" fill="#f5e642" stroke="#e01b24" stroke-width="1.700"/></svg>
<svg style="left:135.0px;top:159.4px" width="30" height="30" viewBox="0 0 26 26"><path d="M10 2.500l8.500 1.500c3 5 3.500 10 1.500 15.500l-8.500 4z" fill="#f5e642" stroke="#e01b24" stroke-width="1.900"/>
<path d="M10 2.500c-3 3-5.500 6.500-7.500 11.500v9l9 .5c1-4 4-8.500 8.500-4" fill="#f5e642" stroke="#e01b24" stroke-width="1.800"/>
<path d="M2.500 14h9v9.500h-9z" fill="#e01b24" stroke="#8f0c12" stroke-width=".8"/><path d="M4.800 16.500h4.400v4.400h-4.400z" fill="#e3d020" stroke="#8f0c12" stroke-width=".7"/>
<path d="M11.500 14c1-4 3.500-7.500 7-10" fill="none" stroke="#e01b24" stroke-width="1.600"/>
<circle cx="23" cy="3" r="1.700" fill="#e01b24" stroke="#8f0c12" stroke-width=".8"/></svg>
<svg style="left:172.0px;top:159.4px" width="30" height="30" viewBox="0 0 26 26"><path d="M14 12.500L24.500 4" stroke="#e01b24" stroke-width="2"/>
<path d="M16.500 3.500C21 4.500 22.500 9 19.500 12 17 14.300 12.500 13.500 10.500 11" fill="none" stroke="#6b6000" stroke-width="6.400" stroke-linecap="round"/><path d="M16.500 3.500C21 4.500 22.500 9 19.500 12 17 14.300 12.500 13.500 10.500 11" fill="none" stroke="#f5e642" stroke-width="4.400" stroke-linecap="round"/>
<path d="M7 9.500C3.500 12 4 17.500 8.500 19 12 20 15 18 15.500 15.500" fill="none" stroke="#6b6000" stroke-width="6.400" stroke-linecap="round"/><path d="M7 9.500C3.500 12 4 17.500 8.500 19 12 20 15 18 15.500 15.500" fill="none" stroke="#f5e642" stroke-width="4.400" stroke-linecap="round"/>
<path d="M8.500 8C10 5 13 3.500 16.500 3.500" fill="none" stroke="#6b6000" stroke-width="5.400" stroke-linecap="round"/><path d="M8.500 8C10 5 13 3.500 16.500 3.500" fill="none" stroke="#c9b000" stroke-width="3.400" stroke-linecap="round"/>
<path d="M1.500 24L13.500 13.500" stroke="#e01b24" stroke-width="2"/><path d="M9 16.500l4.500-3.500" stroke="#e01b24" stroke-width="2"/></svg>
<svg style="left:209.0px;top:159.4px" width="30" height="30" viewBox="0 0 26 26"><path d="M3.500 8l6-4.500h13v13.500l-5.500 5.500h-13.500z" fill="#f7ee7a" stroke="#6b6000" stroke-width="1"/><path d="M3.500 8h13.500v14.500h-13.500z" fill="#f5e642" stroke="#6b6000" stroke-width=".9"/><path d="M17 8l5.500-4.500v13.500l-5.500 5.500z" fill="#d6c212" stroke="#6b6000" stroke-width=".9"/>
<path d="M17 8v14.500M3.500 22.500h13.500l5.500-5.500" stroke="#e01b24" stroke-width="1.500" fill="none"/>
<circle cx="17" cy="8" r="1.900" fill="#e01b24"/><circle cx="3.500" cy="22.500" r="1.900" fill="#e01b24"/><circle cx="17" cy="22.500" r="1.900" fill="#e01b24"/><circle cx="22.500" cy="17" r="1.900" fill="#e01b24"/></svg>
<svg style="left:267.0px;top:159.4px" width="30" height="30" viewBox="0 0 26 26"><path d="M2.600 12.900L14.600 3.100 25.700 6.900V12.900L13.700 23.200 2.600 18.900z" fill="#4f86c6" stroke="#1d3f6e" stroke-width="1.200" stroke-linejoin="round"/>
<path d="M2.600 12.900L13.700 17.200V23.200L2.600 18.900z" fill="#4279b8"/><path d="M13.700 17.200L25.700 6.900V12.900L13.700 23.200z" fill="#2e5f9e"/><path d="M2.600 12.900L14.600 3.100 25.700 6.900 13.700 17.200z" fill="#5b90cd"/>
<path d="M2.600 12.900L13.700 17.200 25.700 6.900M13.700 17.200V23.200" fill="none" stroke="#1d3f6e" stroke-width=".9"/>
<path d="M8.600 9.900L15 5.200 20.100 6.900 13.700 12z" fill="#8f0c12" stroke="#5e0a0e" stroke-width=".8"/><path d="M10.800 10L15.300 6.600 18.200 7.600 13.700 11z" fill="#e01b24"/></svg>
<svg style="left:304.0px;top:159.4px" width="30" height="30" viewBox="0 0 26 26"><path d="M3.100 .900L10.800 .500 25.400 4.800V23.700L17.700 22.800 3.100 19.800z" fill="#2e5f9e" stroke="#1d3f6e" stroke-width="1.200" stroke-linejoin="round"/>
<path d="M3.100 .900L17.700 3.900V22.800L3.100 19.800z" fill="#4f86c6" stroke="#1d3f6e" stroke-width="1"/><path d="M17.700 3.900L25.400 4.800V23.700L17.700 22.800z" fill="#2c5c9c" stroke="#1d3f6e" stroke-width=".9"/>
<ellipse cx="10" cy="12" rx="5.300" ry="6.600" fill="#e01b24" stroke="#8f0c12" stroke-width="1.200"/><path d="M12 6.500c2 1.200 3 3.200 3 5.500s-1 4.300-3 5.500c-1-1.500-1.600-3.300-1.600-5.500s.6-4 1.600-5.500z" fill="#ececec" opacity=".9"/><path d="M12 6.500c-1 1.500-1.600 3.300-1.600 5.500s.6 4 1.600 5.500" fill="none" stroke="#8f0c12" stroke-width=".8"/></svg>
<svg style="left:342.0px;top:159.4px" width="30" height="30" viewBox="0 0 26 26"><path d="M15 11.300L25.100 3.900" stroke="#e01b24" stroke-width="2"/>
<path d="M12.500 5.500c2-2.500 5-3.500 7.500-2.500 2.500 2 3.500 5 3 8-.5 2.500-2 4.500-4 5.500l-2-2c1.500-1 2.500-2.500 2.500-4.500 0-2-1-3.500-2.500-4.500-1.500 0-2.500.8-3.500 2z" fill="#e01b24" stroke="#8f0c12" stroke-width="1"/>
<path d="M14 8c2-1.500 4.500-.5 5.500 1.500s.5 4.500-1.500 6" fill="none" stroke="#8f0c12" stroke-width="1"/>
<path d="M2.800 9.100C8 6 15 11 18.200 19.400L13.900 22.800C12 17 8 13.500 1.900 13.400z" fill="#4f86c6" stroke="#1d3f6e" stroke-width="1.100" stroke-linejoin="round"/>
<path d="M2.500 10.600C8 8.500 14 13 16.800 20.500M2.200 12C7.500 10.500 13 15 15.400 21.600" fill="none" stroke="#1d3f6e" stroke-width=".8"/>
<path d="M1.900 20.600L8.500 15.800" stroke="#e01b24" stroke-width="2"/></svg>
<svg style="left:379.0px;top:159.4px" width="30" height="30" viewBox="0 0 26 26"><path d="M9 3.500l13.500 2.500v17l-13-3z" fill="#e01b24" stroke="#5a86bd" stroke-width="2"/>
<path d="M9 3.500l-6 7.500v9.500l6.500-.5M3 11l19.500-5M3 20.500l19.500 2.500" fill="none" stroke="#5a86bd" stroke-width="1.800"/>
<path d="M3 11l6-7.500 13.500 2.500-10 5z" fill="#e01b24"/><path d="M3 11h9.500v9.500h-9.500z" fill="#5a86bd" stroke="#1d3f6e" stroke-width=".8"/><path d="M5.500 13.500h4.500v4.500h-4.500z" fill="#c4141b" stroke="#1d3f6e" stroke-width=".7"/>
<path d="M12.500 11l10-5v17l-10-2.500z" fill="#e01b24" stroke="#5a86bd" stroke-width="1.700"/></svg>
<svg style="left:416.0px;top:159.4px" width="30" height="30" viewBox="0 0 26 26"><path d="M10 2.500l8.500 1.500c3 5 3.500 10 1.500 15.500l-8.500 4z" fill="#e01b24" stroke="#5a86bd" stroke-width="1.900"/>
<path d="M10 2.500c-3 3-5.500 6.500-7.500 11.500v9l9 .5c1-4 4-8.500 8.500-4" fill="#e01b24" stroke="#5a86bd" stroke-width="1.800"/>
<path d="M2.500 14h9v9.500h-9z" fill="#5a86bd" stroke="#1d3f6e" stroke-width=".8"/><path d="M4.800 16.500h4.400v4.400h-4.400z" fill="#1d3050" stroke="#1d3f6e" stroke-width=".7"/>
<path d="M11.500 14c1-4 3.500-7.500 7-10" fill="none" stroke="#5a86bd" stroke-width="1.600"/>
<circle cx="23" cy="3" r="1.700" fill="#2a2a2a" stroke="#1d3f6e" stroke-width=".8"/></svg>
<svg style="left:454.0px;top:159.4px" width="30" height="30" viewBox="0 0 26 26"><path d="M14 12.500L24.500 4" stroke="#e01b24" stroke-width="2"/>
<path d="M16.500 3.500C21 4.500 22.500 9 19.500 12 17 14.300 12.500 13.500 10.500 11" fill="none" stroke="#1d3f6e" stroke-width="6.400" stroke-linecap="round"/><path d="M16.500 3.500C21 4.500 22.500 9 19.500 12 17 14.300 12.500 13.500 10.500 11" fill="none" stroke="#4f86c6" stroke-width="4.400" stroke-linecap="round"/>
<path d="M7 9.500C3.500 12 4 17.500 8.500 19 12 20 15 18 15.500 15.500" fill="none" stroke="#1d3f6e" stroke-width="6.400" stroke-linecap="round"/><path d="M7 9.500C3.500 12 4 17.500 8.500 19 12 20 15 18 15.500 15.500" fill="none" stroke="#4f86c6" stroke-width="4.400" stroke-linecap="round"/>
<path d="M8.500 8C10 5 13 3.500 16.500 3.500" fill="none" stroke="#1d3f6e" stroke-width="5.400" stroke-linecap="round"/><path d="M8.500 8C10 5 13 3.500 16.500 3.500" fill="none" stroke="#2e5f9e" stroke-width="3.400" stroke-linecap="round"/>
<path d="M1.500 24L13.500 13.500" stroke="#e01b24" stroke-width="2"/><path d="M9 16.500l4.500-3.500" stroke="#e01b24" stroke-width="2"/></svg>
<svg style="left:491.0px;top:159.4px" width="30" height="30" viewBox="0 0 26 26"><path d="M3.500 8l6-4.500h13v13.500l-5.500 5.500h-13.500z" fill="#f04848" stroke="#8f0c12" stroke-width="1"/><path d="M3.500 8h13.500v14.500h-13.500z" fill="#e01b24" stroke="#8f0c12" stroke-width=".9"/><path d="M17 8l5.500-4.500v13.500l-5.500 5.500z" fill="#b3141b" stroke="#8f0c12" stroke-width=".9"/>
<path d="M17 8v14.500M3.500 22.500h13.500l5.500-5.500" stroke="#4f86c6" stroke-width="1.500" fill="none"/>
<circle cx="17" cy="8" r="1.900" fill="#4f86c6"/><circle cx="3.500" cy="22.500" r="1.900" fill="#4f86c6"/><circle cx="17" cy="22.500" r="1.900" fill="#4f86c6"/><circle cx="22.500" cy="17" r="1.900" fill="#4f86c6"/></svg>
<svg style="left:549.0px;top:159.4px" width="30" height="30" viewBox="0 0 26 26"><circle cx="16.500" cy="9.500" r="7.300" fill="#7aa7db" stroke="#2e5f9e" stroke-width="1"/><circle cx="10" cy="16" r="7.800" fill="#4f86c6" stroke="#1d3f6e" stroke-width="1"/><ellipse cx="8" cy="13.500" rx="3.500" ry="2.500" fill="#6f9fd8" opacity=".8"/></svg>
<svg style="left:601.0px;top:159.4px" width="30" height="30" viewBox="0 0 26 26"><circle cx="13" cy="13" r="11.300" fill="#e01b24" stroke="#b80f17" stroke-width="1"/></svg>
<svg style="left:638.0px;top:159.4px" width="30" height="30" viewBox="0 0 26 26"><rect x="3.500" y="2" width="18.500" height="22" fill="#f3f3f3" stroke="#7a7a7a" stroke-width="1"/><path d="M6 5.500h12M6 8h9M6 17h14M6 19.500h14M6 22h10" stroke="#b0b0b0" stroke-width="1"/>
<path d="M7 16.500l2.500-2.500 11-5 1.500 2.500-11.500 5z" fill="#b6a02a" stroke="#6d5e12" stroke-width=".8"/><path d="M18 10.200l2.500-1.200 1.500 2.500-2.600 1.100z" fill="#d2342a"/></svg>
<svg style="left:675.0px;top:159.4px" width="30" height="30" viewBox="0 0 26 26"><path d="M3.500 2.500l20.500 10.500-20.500 10.500z" fill="#c6c6c6" stroke="#adadad" stroke-width="1"/></svg>
<svg style="left:726.0px;top:159.4px" width="30" height="30" viewBox="0 0 26 26"><path d="M2.500 13c0-5.500 3-8.500 8-9.500l8-1 5 3.500v9l-10 7.500-11-3.500z" fill="#4f86c6" stroke="#1d3f6e" stroke-width="1.200" stroke-linejoin="round"/>
<path d="M13.500 15l10-9v9l-10 7.500z" fill="#2e5f9e"/>
<path d="M2.500 15C2.500 8 5 4.500 10.500 3.500L18.500 2.500 23.500 6 15.500 12.300C13.500 13 12.800 14.500 12.800 17.500z" fill="#e01b24" stroke="#8f0c12" stroke-width="1"/>
<path d="M2.500 15l10.300 2.500 .7 5-11-3.500z" fill="#5a8fcf" stroke="#1d3f6e" stroke-width=".8"/><path d="M2.500 16.800l10.600 3" stroke="#1d3f6e" stroke-width=".7"/></svg>
<svg style="left:764.0px;top:159.4px" width="30" height="30" viewBox="0 0 26 26"><path d="M2.500 14l9.500-11 7-1 4.500 3.500v10l-10 7-11-3.500z" fill="#4f86c6" stroke="#1d3f6e" stroke-width="1.100"/>
<path d="M2.500 14l9.500-11 7-1 4.500 3.500-9.500 11.500z" fill="#e01b24" stroke="#8f0c12" stroke-width="1"/>
<path d="M2.500 14l11 3v5.500l-11-3.500z" fill="#2e5f9e" stroke="#1d3f6e" stroke-width=".9"/><path d="M2.500 16.500l11 3.300" stroke="#6a9bd4" stroke-width="1.600"/></svg>
<svg style="left:802.0px;top:159.4px" width="30" height="30" viewBox="0 0 26 26"><path d="M13 1.500l10.500 5v13l-10.500 5-10.500-5v-13z" fill="#5a8cc8" stroke="#1d3f6e" stroke-width="1.200"/>
<path d="M5.500 10l7.500 3 7.500-3v9.500l-7.500 3-7.500-3z" fill="#e01b24" stroke="#8f0c12" stroke-width=".8"/>
<path d="M2.500 6.500l10.500 5 10.500-5M13 11.500v13" fill="none" stroke="#1d3f6e" stroke-width="2.200"/><path d="M2.500 6.500l10.500 5 10.500-5M13 11.500v13" fill="none" stroke="#5a8cc8" stroke-width=".8"/>
<path d="M13 1.500l10.500 5-10.500 5-10.500-5z" fill="#6fa0d8" stroke="#1d3f6e" stroke-width="1"/><path d="M7 20.500l3.500 1.500M19 20.500l-3.500 1.500" stroke="#ddd" stroke-width="1.500"/></svg>
<svg style="left:839.0px;top:159.4px" width="30" height="30" viewBox="0 0 26 26"><path d="M5 4l8-2.500 10 4.500v13.500l-10 5-10.500-5z" fill="#4f86c6" stroke="#1d3f6e" stroke-width="1.200"/>
<path d="M7 6.500l6 2.500 7.500-2.500v11l-7.500 4.500-7-3.500z" fill="#e01b24" stroke="#8f0c12" stroke-width="1"/><path d="M13 9v9l-7 -1M13 18l7.500-0.500" fill="none" stroke="#8f0c12" stroke-width="1.100"/><path d="M13 9v9l7.500-.5v-11z" fill="#c4141b"/></svg>
<svg style="left:890.0px;top:159.4px" width="30" height="30" viewBox="0 0 26 26"><path d="M2 12l5-8 6.500 3 5.500-4.500 5 2v19.500h-22z" fill="#4f86c6" stroke="#1d3f6e" stroke-width="1"/><path d="M2 12l7 3.500v8.500M9 15.500l15-6" fill="none" stroke="#1d3f6e" stroke-width=".8"/>
<path d="M4 8.500l4-5 4 2.500v8l-4 2-4-2z" fill="#2e5f9e" stroke="#1d3f6e" stroke-width=".9"/>
<path d="M12.500 11.500c0-2 2.500-3.200 5.500-3.200s5.500 1.200 5.500 3.200v8c0 2-2.500 3.200-5.500 3.200s-5.500-1.200-5.500-3.200z" fill="#f5e642" stroke="#6b6000" stroke-width=".9"/><ellipse cx="18" cy="11.500" rx="5.500" ry="3" fill="#faf39a" stroke="#6b6000" stroke-width=".8"/>
<path d="M3 21.500l8-5" stroke="#e01b24" stroke-width="1.600"/><circle cx="4" cy="21" r="1.500" fill="#e01b24"/></svg>
<svg style="left:928.0px;top:159.4px" width="30" height="30" viewBox="0 0 26 26"><path d="M2 14l17-11 5 3v18h-22z" fill="#4f86c6" stroke="#1d3f6e" stroke-width="1"/><path d="M2 14l6 3 16-11M8 17v7" fill="none" stroke="#1d3f6e" stroke-width=".7"/><path d="M2 19.500h22v4.500h-22z" fill="#2e5f9e" stroke="#1d3f6e" stroke-width=".8"/><path d="M3 12.5l3.5 -1.75 3.5 1.75v3.5l-3.5 1.75 -3.5 -1.75z" fill="#2e5f9e" stroke="#1d3f6e" stroke-width=".8"/><path d="M3 12.5l3.5 -1.75 3.5 1.75 -3.5 1.75z" fill="#4f86c6" stroke="#1d3f6e" stroke-width=".6"/><path d="M9.5 11l4.2 -2.1 4.2 2.1v4.2l-4.2 2.1 -4.2 -2.1z" fill="#f5e642" stroke="#6b6000" stroke-width=".8"/><path d="M9.5 11l4.2 2.1 4.2 -2.1M13.7 13.1v4.2" fill="none" stroke="#6b6000" stroke-width=".7"/><path d="M9.5 11l4.2 -2.1 4.2 2.1 -4.2 2.1z" fill="#faf39a" stroke="#6b6000" stroke-width=".6"/><path d="M16.5 11l4.2 -2.1 4.2 2.1v4.2l-4.2 2.1 -4.2 -2.1z" fill="#f5e642" stroke="#6b6000" stroke-width=".8"/><path d="M16.5 11l4.2 2.1 4.2 -2.1M20.7 13.1v4.2" fill="none" stroke="#6b6000" stroke-width=".7"/><path d="M16.5 11l4.2 -2.1 4.2 2.1 -4.2 2.1z" fill="#faf39a" stroke="#6b6000" stroke-width=".6"/></svg>
<svg style="left:965.0px;top:159.4px" width="30" height="30" viewBox="0 0 26 26"><path d="M2 14l17-11 5 3v18h-22z" fill="#4f86c6" stroke="#1d3f6e" stroke-width="1"/><path d="M2 14l6 3 16-11M8 17v7" fill="none" stroke="#1d3f6e" stroke-width=".7"/><path d="M2 19.500h22v4.500h-22z" fill="#2e5f9e" stroke="#1d3f6e" stroke-width=".8"/><path d="M9 6.5l3.3 -1.65 3.3 1.65v3.3l-3.3 1.65 -3.3 -1.65z" fill="#f5e642" stroke="#6b6000" stroke-width=".8"/><path d="M9 6.5l3.3 1.65 3.3 -1.65M12.3 8.15v3.3" fill="none" stroke="#6b6000" stroke-width=".7"/><path d="M9 6.5l3.3 -1.65 3.3 1.65 -3.3 1.65z" fill="#faf39a" stroke="#6b6000" stroke-width=".6"/><path d="M15.5 8l3.3 -1.65 3.3 1.65v3.3l-3.3 1.65 -3.3 -1.65z" fill="#f5e642" stroke="#6b6000" stroke-width=".8"/><path d="M15.5 8l3.3 1.65 3.3 -1.65M18.8 9.65v3.3" fill="none" stroke="#6b6000" stroke-width=".7"/><path d="M15.5 8l3.3 -1.65 3.3 1.65 -3.3 1.65z" fill="#faf39a" stroke="#6b6000" stroke-width=".6"/><path d="M4.5 14l3.3 -1.65 3.3 1.65v3.3l-3.3 1.65 -3.3 -1.65z" fill="#2e5f9e" stroke="#1d3f6e" stroke-width=".8"/><path d="M4.5 14l3.3 -1.65 3.3 1.65 -3.3 1.65z" fill="#4f86c6" stroke="#1d3f6e" stroke-width=".6"/><path d="M10.5 14.5l3.3 -1.65 3.3 1.65v3.3l-3.3 1.65 -3.3 -1.65z" fill="#f5e642" stroke="#6b6000" stroke-width=".8"/><path d="M10.5 14.5l3.3 1.65 3.3 -1.65M13.8 16.15v3.3" fill="none" stroke="#6b6000" stroke-width=".7"/><path d="M10.5 14.5l3.3 -1.65 3.3 1.65 -3.3 1.65z" fill="#faf39a" stroke="#6b6000" stroke-width=".6"/><path d="M16.5 14.5l3.3 -1.65 3.3 1.65v3.3l-3.3 1.65 -3.3 -1.65z" fill="#f5e642" stroke="#6b6000" stroke-width=".8"/><path d="M16.5 14.5l3.3 1.65 3.3 -1.65M19.8 16.15v3.3" fill="none" stroke="#6b6000" stroke-width=".7"/><path d="M16.5 14.5l3.3 -1.65 3.3 1.65 -3.3 1.65z" fill="#faf39a" stroke="#6b6000" stroke-width=".6"/><path d="M14 3l3 -1.5 3 1.5v3l-3 1.5 -3 -1.5z" fill="#f5e642" stroke="#6b6000" stroke-width=".8"/><path d="M14 3l3 1.5 3 -1.5M17 4.5v3" fill="none" stroke="#6b6000" stroke-width=".7"/><path d="M14 3l3 -1.5 3 1.5 -3 1.5z" fill="#faf39a" stroke="#6b6000" stroke-width=".6"/></svg>
<svg style="left:1003.0px;top:159.4px" width="30" height="30" viewBox="0 0 26 26"><path d="M2 14l17-11 5 3v18h-22z" fill="#4f86c6" stroke="#1d3f6e" stroke-width="1"/><path d="M2 14l6 3 16-11M8 17v7" fill="none" stroke="#1d3f6e" stroke-width=".7"/><path d="M2 19.500h22v4.500h-22z" fill="#2e5f9e" stroke="#1d3f6e" stroke-width=".8"/><path d="M3.5 5l3.2 -1.6 3.2 1.6v3.2l-3.2 1.6 -3.2 -1.6z" fill="#f5e642" stroke="#6b6000" stroke-width=".8"/><path d="M3.5 5l3.2 1.6 3.2 -1.6M6.7 6.6v3.2" fill="none" stroke="#6b6000" stroke-width=".7"/><path d="M3.5 5l3.2 -1.6 3.2 1.6 -3.2 1.6z" fill="#faf39a" stroke="#6b6000" stroke-width=".6"/><path d="M9 5.5l6 -3.0 6 3.0v6l-6 3.0 -6 -3.0z" fill="#f5e642" stroke="#6b6000" stroke-width=".8"/><path d="M9 5.5l6 3.0 6 -3.0M15 8.5v6" fill="none" stroke="#6b6000" stroke-width=".7"/><path d="M9 5.5l6 -3.0 6 3.0 -6 3.0z" fill="#faf39a" stroke="#6b6000" stroke-width=".6"/><path d="M7 16l3.5 -1.75 3.5 1.75v3.5l-3.5 1.75 -3.5 -1.75z" fill="#2e5f9e" stroke="#1d3f6e" stroke-width=".8"/><path d="M7 16l3.5 -1.75 3.5 1.75 -3.5 1.75z" fill="#4f86c6" stroke="#1d3f6e" stroke-width=".6"/><path d="M14 14l4.8 -2.4 4.8 2.4v4.8l-4.8 2.4 -4.8 -2.4z" fill="#f5e642" stroke="#6b6000" stroke-width=".8"/><path d="M14 14l4.8 2.4 4.8 -2.4M18.8 16.4v4.8" fill="none" stroke="#6b6000" stroke-width=".7"/><path d="M14 14l4.8 -2.4 4.8 2.4 -4.8 2.4z" fill="#faf39a" stroke="#6b6000" stroke-width=".6"/></svg>
<svg style="left:245.5px;top:171.9px" width="9" height="5" viewBox="0 0 9 5"><path d="M0 0h9l-4.500 5z" fill="#1a1a1a"/></svg>
<svg style="left:527.5px;top:171.9px" width="9" height="5" viewBox="0 0 9 5"><path d="M0 0h9l-4.500 5z" fill="#1a1a1a"/></svg>
<div class="a" style="left:9px;top:195px;width:64px;height:25px;background:#fff"></div>
<div class="a" style="left:73px;top:197px;width:55px;height:23px;background:#f0f0f0;border:1px solid #d9d9d9;border-bottom:none"></div>
<div class="a" style="left:73px;top:219px;width:277px;height:1px;background:#b4b4b4"></div>
<div class="t" style="left:22px;top:201.3px;font-size:13.8px;color:#000;font-weight:400;letter-spacing:-0.750px">Model</div>
<div class="t" style="left:85px;top:202.3px;font-size:13.8px;color:#000;font-weight:400;letter-spacing:-0.950px">Tasks</div>
<div class="t" style="left:133.7px;top:222.6px;font-size:13.8px;color:#000;font-weight:400;letter-spacing:-0.750px">Model</div>
<svg style="left:290px;top:224px" width="10" height="10" viewBox="0 0 10 10"><rect x=".700" y=".700" width="8.600" height="8.600" fill="none" stroke="#8a8a8a" stroke-width="1.200"/><path d="M.700 3.300h8.600" stroke="#8a8a8a" stroke-width="1.200"/></svg>
<svg style="left:313px;top:224px" width="10" height="10" viewBox="0 0 10 10"><rect x=".600" y="3.300" width="6" height="6" fill="none" stroke="#8a8a8a" stroke-width="1.200"/><path d="M3.300 3.300v-2.700h6v6h-2.700" fill="none" stroke="#8a8a8a" stroke-width="1.200"/></svg>
<svg style="left:336px;top:224.5px" width="9" height="9" viewBox="0 0 9 9"><path d="M.500 .500l8 8M8.500 .500l-8 8" stroke="#555" stroke-width="1.400"/></svg>
<div class="a" style="left:9px;top:238px;width:341px;height:640px;background:#fff;border-top:1px solid #8f8f8f;border-right:1px solid #7f7f7f;border-bottom:1px solid #8f8f8f"></div>
<div class="t" style="left:14px;top:246px;font-size:14.2px;color:#111;font-weight:400;letter-spacing:.150px">Labels &amp; Attributes</div>
<div class="a" style="left:337px;top:241px;width:1px;height:24px;background:#e2e2e2"></div>
<div class="a" style="left:344px;top:247px;width:2px;height:12px;background:#222"></div>
<div class="a" style="left:344px;top:247px;width:4px;height:1.5px;background:#222"></div>
<div class="a" style="left:344px;top:257.5px;width:4px;height:1.5px;background:#222"></div>
<svg style="left:15px;top:275px" width="12" height="8" viewBox="0 0 12 8"><path d="M1 1.500l5 5 5-5" fill="none" stroke="#3a3a3a" stroke-width="1.900"/></svg>
<svg style="left:35.5px;top:268.5px" width="21" height="21" viewBox="0 0 20 20"><path d="M4 1.500h8.500l3.500 3.500v13.500h-12z" fill="#f6f6f6" stroke="#8a8a8a" stroke-width="1"/><path d="M12.500 1.500v3.500h3.500" fill="#ddd" stroke="#8a8a8a" stroke-width=".8"/><path d="M6 10l3.500-2 3.500 1.500v4.500l-3.500 2-3.500-1.500z" fill="#3568b0" stroke="#1d3f6e" stroke-width=".8"/><path d="M8 7.500c0-2 2-3 4-2.500s3 2 2.500 3.500l-1.500 1.200-3.500-1.500z" fill="#e0242c" stroke="#8f0c12" stroke-width=".7"/></svg>
<div class="t" style="left:64px;top:272px;font-size:14.2px;color:#000;font-weight:700;letter-spacing:-0.190px">Model Bend Pipe with Flange in FreeCAD</div>
<svg style="left:39px;top:299px" width="12" height="8" viewBox="0 0 12 8"><path d="M1 1.500l5 5 5-5" fill="none" stroke="#3a3a3a" stroke-width="1.900"/></svg>
<svg style="left:62px;top:297.5px" width="16" height="11" viewBox="0 0 16 11"><path d="M1 5.500c2-3 4.500-4.500 7-4.500s5 1.500 7 4.500c-2 3-4.500 4.500-7 4.500s-5-1.500-7-4.500z" fill="#fff" stroke="#111" stroke-width="1.500"/><circle cx="8" cy="5.500" r="2.700" fill="#111"/><circle cx="9.200" cy="4.600" r=".9" fill="#fff"/></svg>
<svg style="left:87.0px;top:293.0px" width="20" height="20" viewBox="0 0 20 20"><g transform="scale(.7692)"><path d="M4.100 8.900L12.100 2.600 16.700 4.800V9.400L22.200 11.900V17.600L15.300 23.600 4.100 20.100z" fill="#4a80c0" stroke="#1d3f6e" stroke-width="1.500" stroke-linejoin="round"/>
<path d="M4.100 8.900L12.100 2.600 16.700 4.800 9.300 11.100z" fill="#7fb0e2"/><path d="M9.300 11.100L16.700 4.800V9.400L11 16z" fill="#3568a8"/>
<path d="M11 16L16.700 9.400 22.200 11.900 15.900 17.600z" fill="#7fb0e2"/><path d="M15.900 17.600L22.200 11.900V17.600L15.300 23.600z" fill="#2b5b9a"/>
<path d="M4.100 8.900L9.300 11.100 11 16 15.900 17.600 15.300 23.600 4.100 20.100z" fill="#4f88c8"/>
<path d="M4.100 8.900L9.300 11.100 11 16 15.900 17.600 22.200 11.900M9.300 11.100L16.700 4.800M11 16L16.700 9.400M15.900 17.600L15.300 23.600" fill="none" stroke="#1d3f6e" stroke-width=".9" stroke-linejoin="round"/></g></svg>
<div class="t" style="left:114px;top:296px;font-size:14px;color:#111;font-weight:400;letter-spacing:-0.2px">Body</div>
<svg style="left:65.0px;top:321px" width="8" height="12" viewBox="0 0 8 12"><path d="M1.500 1l5 5-5 5" fill="none" stroke="#9b9b9b" stroke-width="1.700"/></svg>
<svg style="left:86.8px;top:320px" width="16" height="14" viewBox="0 0 16 14"><path d="M1.500 7c2-2.800 4.200-4 6.500-4s4.500 1.200 6.500 4c-2 2.800-4.200 4-6.500 4s-4.500-1.200-6.500-4z" fill="none" stroke="#5a5a5a" stroke-width="1.200"/><circle cx="8" cy="7" r="2" fill="none" stroke="#5a5a5a" stroke-width="1.100"/><path d="M2.500 1l11.500 12" stroke="#fff" stroke-width="2.800"/><path d="M2.800 1.200l11 11.800" stroke="#4a4a4a" stroke-width="1.300"/></svg>
<svg style="left:111.75px;top:317.25px" width="19.5" height="19.5" viewBox="0 0 20 20"><path d="M8 1v9M8 10l9.500 0M8 10l-6 6.500" stroke="#8c8c8c" stroke-width="2.200" stroke-linecap="round" fill="none"/><path d="M8 10l9.500 0" stroke="#b4b4b4" stroke-width="2.200" stroke-linecap="round"/></svg>
<div class="t" style="left:138.5px;top:319.7px;font-size:14.4px;color:#8e8e8e;font-weight:400;letter-spacing:-0.2px">Origin</div>
<svg style="left:65.0px;top:345px" width="8" height="12" viewBox="0 0 8 12"><path d="M1.500 1l5 5-5 5" fill="none" stroke="#9b9b9b" stroke-width="1.700"/></svg>
<svg style="left:86.8px;top:344px" width="16" height="14" viewBox="0 0 16 14"><path d="M1.500 7c2-2.800 4.200-4 6.500-4s4.500 1.200 6.500 4c-2 2.800-4.200 4-6.500 4s-4.500-1.200-6.500-4z" fill="none" stroke="#5a5a5a" stroke-width="1.200"/><circle cx="8" cy="7" r="2" fill="none" stroke="#5a5a5a" stroke-width="1.100"/><path d="M2.500 1l11.500 12" stroke="#fff" stroke-width="2.800"/><path d="M2.800 1.200l11 11.800" stroke="#4a4a4a" stroke-width="1.300"/></svg>
<svg style="left:111.75px;top:341.25px" width="19.5" height="19.5" viewBox="0 0 20 20"><path d="M7 2.500l6 1c2.500 4 3 8 1.500 12l-7 3z" fill="#d6d6d6" stroke="#8c8c8c" stroke-width="1.200"/><path d="M7 2.500c-2.500 2.500-4 5.500-5.500 9v7l6 0c1-3 3-6 7-3" fill="#d6d6d6" stroke="#8c8c8c" stroke-width="1.200"/><path d="M1.500 11.500h6.500v7h-6.500z" fill="#8c8c8c" stroke="#6e6e6e" stroke-width=".7"/><path d="M3.200 13.300h3v3h-3z" fill="#d6d6d6"/><circle cx="17.500" cy="2" r="1.200" fill="#6e6e6e"/></svg>
<div class="t" style="left:138.5px;top:343.7px;font-size:14.4px;color:#8e8e8e;font-weight:400;letter-spacing:-0.2px">AdditivePipe</div>
<svg style="left:65.0px;top:369px" width="8" height="12" viewBox="0 0 8 12"><path d="M1.500 1l5 5-5 5" fill="none" stroke="#9b9b9b" stroke-width="1.700"/></svg>
<svg style="left:86.8px;top:368px" width="16" height="14" viewBox="0 0 16 14"><path d="M1.500 7c2-2.800 4.200-4 6.500-4s4.500 1.200 6.500 4c-2 2.800-4.200 4-6.500 4s-4.500-1.200-6.500-4z" fill="none" stroke="#5a5a5a" stroke-width="1.200"/><circle cx="8" cy="7" r="2" fill="none" stroke="#5a5a5a" stroke-width="1.100"/><path d="M2.500 1l11.500 12" stroke="#fff" stroke-width="2.800"/><path d="M2.800 1.200l11 11.800" stroke="#4a4a4a" stroke-width="1.300"/></svg>
<svg style="left:111.75px;top:365.25px" width="19.5" height="19.5" viewBox="0 0 20 20"><path d="M10 12.300l6.600 2.400-6.600 2.800-6.600-2.800z" fill="#efefef" stroke="#6e6e6e" stroke-width="2.300"/><path d="M10 1.500l8 2.800v5.700l-8 3.500-8-3.500v-5.700z" fill="#d6d6d6" stroke="#8c8c8c" stroke-width="1"/><path d="M2 4.300l8 3.200 8-3.200M10 7.500v6" fill="none" stroke="#8c8c8c" stroke-width=".8"/><path d="M2 4.300l8 3.200v6l-8-3.500z" fill="#b4b4b4" opacity=".55"/></svg>
<div class="t" style="left:138.5px;top:367.7px;font-size:14.4px;color:#8e8e8e;font-weight:400;letter-spacing:-0.2px">Pad</div>
<svg style="left:65.0px;top:393px" width="8" height="12" viewBox="0 0 8 12"><path d="M1.500 1l5 5-5 5" fill="none" stroke="#9b9b9b" stroke-width="1.700"/></svg>
<svg style="left:86.8px;top:392px" width="16" height="14" viewBox="0 0 16 14"><path d="M1.500 7c2-2.800 4.200-4 6.500-4s4.500 1.200 6.500 4c-2 2.800-4.200 4-6.500 4s-4.500-1.200-6.500-4z" fill="none" stroke="#5a5a5a" stroke-width="1.200"/><circle cx="8" cy="7" r="2" fill="none" stroke="#5a5a5a" stroke-width="1.100"/><path d="M2.500 1l11.500 12" stroke="#fff" stroke-width="2.800"/><path d="M2.800 1.200l11 11.800" stroke="#4a4a4a" stroke-width="1.300"/></svg>
<svg style="left:111.75px;top:389.25px" width="19.5" height="19.5" viewBox="0 0 20 20"><path d="M10 12.300l6.600 2.400-6.600 2.800-6.600-2.800z" fill="#efefef" stroke="#6e6e6e" stroke-width="2.300"/><path d="M10 1.500l8 2.800v5.700l-8 3.500-8-3.500v-5.700z" fill="#d6d6d6" stroke="#8c8c8c" stroke-width="1"/><path d="M2 4.300l8 3.200 8-3.200M10 7.500v6" fill="none" stroke="#8c8c8c" stroke-width=".8"/><path d="M2 4.300l8 3.200v6l-8-3.500z" fill="#b4b4b4" opacity=".55"/></svg>
<div class="t" style="left:138.5px;top:391.7px;font-size:14.4px;color:#8e8e8e;font-weight:400;letter-spacing:-0.2px">Pad001</div>
<svg style="left:86.8px;top:416px" width="16" height="14" viewBox="0 0 16 14"><path d="M1.500 7c2-2.800 4.200-4 6.500-4s4.500 1.200 6.500 4c-2 2.800-4.200 4-6.500 4s-4.500-1.200-6.500-4z" fill="none" stroke="#5a5a5a" stroke-width="1.200"/><circle cx="8" cy="7" r="2" fill="none" stroke="#5a5a5a" stroke-width="1.100"/><path d="M2.500 1l11.500 12" stroke="#fff" stroke-width="2.800"/><path d="M2.800 1.200l11 11.800" stroke="#4a4a4a" stroke-width="1.300"/></svg>
<svg style="left:111.75px;top:413.25px" width="19.5" height="19.5" viewBox="0 0 20 20"><path d="M10 1.800l8 7.700-9 8.700-7-8z" fill="none" stroke="#8c8c8c" stroke-width="2.600"/></svg>
<div class="t" style="left:138.5px;top:415.7px;font-size:14.4px;color:#8e8e8e;font-weight:400;letter-spacing:-0.2px">DatumPlane</div>
<svg style="left:65.0px;top:441px" width="8" height="12" viewBox="0 0 8 12"><path d="M1.500 1l5 5-5 5" fill="none" stroke="#9b9b9b" stroke-width="1.700"/></svg>
<svg style="left:86.8px;top:440px" width="16" height="14" viewBox="0 0 16 14"><path d="M1.500 7c2-2.800 4.200-4 6.500-4s4.500 1.200 6.500 4c-2 2.800-4.200 4-6.500 4s-4.500-1.200-6.500-4z" fill="none" stroke="#5a5a5a" stroke-width="1.200"/><circle cx="8" cy="7" r="2" fill="none" stroke="#5a5a5a" stroke-width="1.100"/><path d="M2.500 1l11.500 12" stroke="#fff" stroke-width="2.800"/><path d="M2.800 1.200l11 11.800" stroke="#4a4a4a" stroke-width="1.300"/></svg>
<svg style="left:111.75px;top:437.25px" width="19.5" height="19.5" viewBox="0 0 20 20"><path d="M10 12.300l6.600 2.400-6.600 2.800-6.600-2.800z" fill="#efefef" stroke="#6e6e6e" stroke-width="2.300"/><path d="M10 1.500l8 2.800v5.700l-8 3.500-8-3.500v-5.700z" fill="#d6d6d6" stroke="#8c8c8c" stroke-width="1"/><path d="M2 4.300l8 3.200 8-3.200M10 7.500v6" fill="none" stroke="#8c8c8c" stroke-width=".8"/><path d="M2 4.300l8 3.200v6l-8-3.500z" fill="#b4b4b4" opacity=".55"/></svg>
<div class="t" style="left:138.5px;top:439.7px;font-size:14.4px;color:#8e8e8e;font-weight:400;letter-spacing:-0.2px">Pad002</div>
<svg style="left:65.0px;top:465px" width="8" height="12" viewBox="0 0 8 12"><path d="M1.500 1l5 5-5 5" fill="none" stroke="#9b9b9b" stroke-width="1.700"/></svg>
<svg style="left:86.8px;top:464px" width="16" height="14" viewBox="0 0 16 14"><path d="M1.500 7c2-2.800 4.200-4 6.500-4s4.500 1.200 6.500 4c-2 2.800-4.200 4-6.500 4s-4.500-1.200-6.500-4z" fill="none" stroke="#5a5a5a" stroke-width="1.200"/><circle cx="8" cy="7" r="2" fill="none" stroke="#5a5a5a" stroke-width="1.100"/><path d="M2.500 1l11.500 12" stroke="#fff" stroke-width="2.800"/><path d="M2.800 1.200l11 11.800" stroke="#4a4a4a" stroke-width="1.300"/></svg>
<svg style="left:111.75px;top:461.25px" width="19.5" height="19.5" viewBox="0 0 20 20"><path d="M10 12.300l6.600 2.400-6.600 2.800-6.600-2.800z" fill="#efefef" stroke="#6e6e6e" stroke-width="2.300"/><path d="M10 1.500l8 2.800v5.700l-8 3.500-8-3.500v-5.700z" fill="#d6d6d6" stroke="#8c8c8c" stroke-width="1"/><path d="M2 4.300l8 3.200 8-3.200M10 7.500v6" fill="none" stroke="#8c8c8c" stroke-width=".8"/><path d="M2 4.300l8 3.200v6l-8-3.500z" fill="#b4b4b4" opacity=".55"/></svg>
<div class="t" style="left:138.5px;top:463.7px;font-size:14.4px;color:#8e8e8e;font-weight:400;letter-spacing:-0.2px">Pad003</div>
<svg style="left:63px;top:491px" width="12" height="8" viewBox="0 0 12 8"><path d="M1 1.500l5 5 5-5" fill="none" stroke="#3a3a3a" stroke-width="1.900"/></svg>
<svg style="left:86.8px;top:488px" width="16" height="14" viewBox="0 0 16 14"><path d="M1.500 7c2-2.800 4.200-4 6.500-4s4.500 1.200 6.500 4c-2 2.800-4.200 4-6.500 4s-4.500-1.200-6.500-4z" fill="none" stroke="#5a5a5a" stroke-width="1.200"/><circle cx="8" cy="7" r="2" fill="none" stroke="#5a5a5a" stroke-width="1.100"/><path d="M2.500 1l11.500 12" stroke="#fff" stroke-width="2.800"/><path d="M2.800 1.200l11 11.800" stroke="#4a4a4a" stroke-width="1.300"/></svg>
<svg style="left:111.75px;top:485.25px" width="19.5" height="19.5" viewBox="0 0 20 20"><path d="M10 12.300l6.600 2.400-6.600 2.800-6.600-2.800z" fill="#efefef" stroke="#6e6e6e" stroke-width="2.300"/><path d="M10 1.500l8 2.800v5.700l-8 3.500-8-3.500v-5.700z" fill="#d6d6d6" stroke="#8c8c8c" stroke-width="1"/><path d="M2 4.300l8 3.200 8-3.200M10 7.500v6" fill="none" stroke="#8c8c8c" stroke-width=".8"/><path d="M2 4.300l8 3.200v6l-8-3.500z" fill="#b4b4b4" opacity=".55"/></svg>
<div class="t" style="left:138.5px;top:487.7px;font-size:14.4px;color:#8e8e8e;font-weight:400;letter-spacing:-0.2px">Pad004</div>
<svg style="left:110.8px;top:512px" width="16" height="14" viewBox="0 0 16 14"><path d="M1.500 7c2-2.800 4.200-4 6.500-4s4.500 1.200 6.500 4c-2 2.800-4.200 4-6.500 4s-4.500-1.200-6.500-4z" fill="none" stroke="#5a5a5a" stroke-width="1.200"/><circle cx="8" cy="7" r="2" fill="none" stroke="#5a5a5a" stroke-width="1.100"/><path d="M2.500 1l11.500 12" stroke="#fff" stroke-width="2.800"/><path d="M2.800 1.200l11 11.800" stroke="#4a4a4a" stroke-width="1.300"/></svg>
<svg style="left:135.75px;top:509.25px" width="19.5" height="19.5" viewBox="0 0 20 20"><rect x="2" y="7" width="10.500" height="10.500" rx="1" fill="#fff" stroke="#8c8c8c" stroke-width="1.700"/><circle cx="12.500" cy="7.500" r="5.300" fill="#fff" fill-opacity=".0" stroke="#8c8c8c" stroke-width="1.700"/></svg>
<div class="t" style="left:162.5px;top:511.7px;font-size:14.4px;color:#8e8e8e;font-weight:400;letter-spacing:-0.2px">Sketch006</div>
<svg style="left:86.8px;top:536px" width="16" height="14" viewBox="0 0 16 14"><path d="M1.500 7c2-2.800 4.200-4 6.500-4s4.500 1.200 6.500 4c-2 2.800-4.200 4-6.500 4s-4.500-1.200-6.500-4z" fill="none" stroke="#5a5a5a" stroke-width="1.200"/><circle cx="8" cy="7" r="2" fill="none" stroke="#5a5a5a" stroke-width="1.100"/><path d="M2.500 1l11.500 12" stroke="#fff" stroke-width="2.800"/><path d="M2.800 1.200l11 11.800" stroke="#4a4a4a" stroke-width="1.300"/></svg>
<svg style="left:111.75px;top:533.25px" width="19.5" height="19.5" viewBox="0 0 20 20"><path d="M1.500 10l3-6 4 2 4-4 6 2.500v14h-17z" fill="#b4b4b4" stroke="#8c8c8c" stroke-width="1"/><path d="M3 7.500l3-3.500 3 2v6l-3 1.500-3-1.500z" fill="#8c8c8c"/><path d="M9 10c0-1.500 2-2.500 4.500-2.500s4.500 1 4.500 2.500v5.500c0 1.500-2 2.500-4.500 2.500s-4.500-1-4.500-2.500z" fill="#d6d6d6" stroke="#8c8c8c" stroke-width=".8"/><ellipse cx="13.500" cy="10" rx="4.500" ry="2.300" fill="#ececec" stroke="#8c8c8c" stroke-width=".7"/></svg>
<div class="t" style="left:138.5px;top:535.7px;font-size:14.4px;color:#8e8e8e;font-weight:400;letter-spacing:-0.2px">Mirrored</div>
<svg style="left:63px;top:563px" width="12" height="8" viewBox="0 0 12 8"><path d="M1 1.500l5 5 5-5" fill="none" stroke="#3a3a3a" stroke-width="1.900"/></svg>
<svg style="left:86.8px;top:560px" width="16" height="14" viewBox="0 0 16 14"><path d="M1.500 7c2-2.800 4.200-4 6.500-4s4.500 1.200 6.500 4c-2 2.800-4.200 4-6.500 4s-4.500-1.200-6.500-4z" fill="none" stroke="#5a5a5a" stroke-width="1.200"/><circle cx="8" cy="7" r="2" fill="none" stroke="#5a5a5a" stroke-width="1.100"/><path d="M2.500 1l11.500 12" stroke="#fff" stroke-width="2.800"/><path d="M2.800 1.200l11 11.800" stroke="#4a4a4a" stroke-width="1.300"/></svg>
<svg style="left:111.75px;top:557.25px" width="19.5" height="19.5" viewBox="0 0 20 20"><path d="M10 12.300l6.600 2.400-6.600 2.800-6.600-2.800z" fill="#efefef" stroke="#6e6e6e" stroke-width="2.300"/><path d="M10 1.500l8 2.800v5.700l-8 3.500-8-3.500v-5.700z" fill="#d6d6d6" stroke="#8c8c8c" stroke-width="1"/><path d="M2 4.300l8 3.200 8-3.200M10 7.500v6" fill="none" stroke="#8c8c8c" stroke-width=".8"/><path d="M2 4.300l8 3.200v6l-8-3.500z" fill="#b4b4b4" opacity=".55"/></svg>
<div class="t" style="left:138.5px;top:559.7px;font-size:14.4px;color:#8e8e8e;font-weight:400;letter-spacing:-0.2px">Pad005</div>
<svg style="left:110.8px;top:584px" width="16" height="14" viewBox="0 0 16 14"><path d="M1.500 7c2-2.800 4.200-4 6.500-4s4.500 1.200 6.500 4c-2 2.800-4.200 4-6.500 4s-4.500-1.200-6.500-4z" fill="none" stroke="#5a5a5a" stroke-width="1.200"/><circle cx="8" cy="7" r="2" fill="none" stroke="#5a5a5a" stroke-width="1.100"/><path d="M2.500 1l11.500 12" stroke="#fff" stroke-width="2.800"/><path d="M2.800 1.200l11 11.800" stroke="#4a4a4a" stroke-width="1.300"/></svg>
<svg style="left:135.75px;top:581.25px" width="19.5" height="19.5" viewBox="0 0 20 20"><rect x="2" y="7" width="10.500" height="10.500" rx="1" fill="#fff" stroke="#8c8c8c" stroke-width="1.700"/><circle cx="12.500" cy="7.500" r="5.300" fill="#fff" fill-opacity=".0" stroke="#8c8c8c" stroke-width="1.700"/></svg>
<div class="t" style="left:162.5px;top:583.7px;font-size:14.4px;color:#8e8e8e;font-weight:400;letter-spacing:-0.2px">Sketch007</div>
<svg style="left:86.8px;top:608px" width="16" height="14" viewBox="0 0 16 14"><path d="M1.500 7c2-2.800 4.200-4 6.500-4s4.500 1.200 6.500 4c-2 2.800-4.200 4-6.500 4s-4.500-1.200-6.500-4z" fill="none" stroke="#5a5a5a" stroke-width="1.200"/><circle cx="8" cy="7" r="2" fill="none" stroke="#5a5a5a" stroke-width="1.100"/><path d="M2.500 1l11.500 12" stroke="#fff" stroke-width="2.800"/><path d="M2.800 1.200l11 11.800" stroke="#4a4a4a" stroke-width="1.300"/></svg>
<svg style="left:111.75px;top:605.25px" width="19.5" height="19.5" viewBox="0 0 20 20"><path d="M1.500 10l3-6 4 2 4-4 6 2.500v14h-17z" fill="#b4b4b4" stroke="#8c8c8c" stroke-width="1"/><path d="M3 7.500l3-3.500 3 2v6l-3 1.500-3-1.500z" fill="#8c8c8c"/><path d="M9 10c0-1.500 2-2.500 4.500-2.500s4.500 1 4.500 2.500v5.500c0 1.500-2 2.500-4.500 2.500s-4.500-1-4.500-2.500z" fill="#d6d6d6" stroke="#8c8c8c" stroke-width=".8"/><ellipse cx="13.500" cy="10" rx="4.500" ry="2.300" fill="#ececec" stroke="#8c8c8c" stroke-width=".7"/></svg>
<div class="t" style="left:138.5px;top:607.7px;font-size:14.4px;color:#8e8e8e;font-weight:400;letter-spacing:-0.2px">Mirrored001</div>
<svg style="left:63px;top:635px" width="12" height="8" viewBox="0 0 12 8"><path d="M1 1.500l5 5 5-5" fill="none" stroke="#3a3a3a" stroke-width="1.900"/></svg>
<svg style="left:86.8px;top:632px" width="16" height="14" viewBox="0 0 16 14"><path d="M1.500 7c2-2.800 4.200-4 6.500-4s4.500 1.200 6.500 4c-2 2.800-4.200 4-6.500 4s-4.500-1.200-6.500-4z" fill="none" stroke="#5a5a5a" stroke-width="1.200"/><circle cx="8" cy="7" r="2" fill="none" stroke="#5a5a5a" stroke-width="1.100"/><path d="M2.500 1l11.500 12" stroke="#fff" stroke-width="2.800"/><path d="M2.800 1.200l11 11.800" stroke="#4a4a4a" stroke-width="1.300"/></svg>
<svg style="left:111.75px;top:629.25px" width="19.5" height="19.5" viewBox="0 0 20 20"><path d="M2 1.500l11.500 2.700 4.500-.7v13l-4.500 2-11.500-2.700z" fill="#b4b4b4" stroke="#8c8c8c" stroke-width="1.100"/><path d="M13.500 4.200v14.300l4.500-2v-13z" fill="#8c8c8c"/><ellipse cx="8" cy="10" rx="4.600" ry="6" fill="#d6d6d6" stroke="#6e6e6e" stroke-width="1"/><path d="M8.500 5c2.200 1 3 3 3 5s-.8 4-2.700 5c-1.300-1.500-2-3-2-5s.7-3.500 1.700-5z" fill="#f0f0f0"/></svg>
<div class="t" style="left:138.5px;top:631.7px;font-size:14.4px;color:#8e8e8e;font-weight:400;letter-spacing:-0.2px">Hole</div>
<svg style="left:110.8px;top:656px" width="16" height="14" viewBox="0 0 16 14"><path d="M1.500 7c2-2.800 4.200-4 6.500-4s4.500 1.200 6.500 4c-2 2.800-4.200 4-6.500 4s-4.500-1.200-6.500-4z" fill="none" stroke="#5a5a5a" stroke-width="1.200"/><circle cx="8" cy="7" r="2" fill="none" stroke="#5a5a5a" stroke-width="1.100"/><path d="M2.500 1l11.500 12" stroke="#fff" stroke-width="2.800"/><path d="M2.800 1.200l11 11.800" stroke="#4a4a4a" stroke-width="1.300"/></svg>
<svg style="left:135.75px;top:653.25px" width="19.5" height="19.5" viewBox="0 0 20 20"><rect x="2" y="7" width="10.500" height="10.500" rx="1" fill="#fff" stroke="#8c8c8c" stroke-width="1.700"/><circle cx="12.500" cy="7.500" r="5.300" fill="#fff" fill-opacity=".0" stroke="#8c8c8c" stroke-width="1.700"/></svg>
<div class="t" style="left:162.5px;top:655.7px;font-size:14.4px;color:#8e8e8e;font-weight:400;letter-spacing:-0.2px">Sketch008</div>
<svg style="left:86.8px;top:680px" width="16" height="14" viewBox="0 0 16 14"><path d="M1.500 7c2-2.800 4.200-4 6.500-4s4.500 1.200 6.500 4c-2 2.800-4.200 4-6.500 4s-4.500-1.200-6.500-4z" fill="none" stroke="#5a5a5a" stroke-width="1.200"/><circle cx="8" cy="7" r="2" fill="none" stroke="#5a5a5a" stroke-width="1.100"/><path d="M2.500 1l11.500 12" stroke="#fff" stroke-width="2.800"/><path d="M2.800 1.200l11 11.800" stroke="#4a4a4a" stroke-width="1.300"/></svg>
<svg style="left:111.75px;top:677.25px" width="19.5" height="19.5" viewBox="0 0 20 20"><path d="M1.500 11l13-8.500 4 2.500v13.500h-17z" fill="#b4b4b4" stroke="#8c8c8c" stroke-width="1"/><path d="M6 7l2.500 -1.200 2.500 1.200v2.600l-2.500 1.200-2.500-1.200z" fill="#d6d6d6" stroke="#8c8c8c" stroke-width=".7"/><path d="M11 5l2.500 -1.200 2.500 1.200v2.600l-2.500 1.200-2.500-1.200z" fill="#d6d6d6" stroke="#8c8c8c" stroke-width=".7"/><path d="M3.5 11.5l2.500 -1.200 2.500 1.200v2.600l-2.500 1.200-2.500-1.200z" fill="#d6d6d6" stroke="#8c8c8c" stroke-width=".7"/><path d="M8.5 11.5l2.500 -1.200 2.500 1.200v2.600l-2.500 1.200-2.500-1.200z" fill="#d6d6d6" stroke="#8c8c8c" stroke-width=".7"/><path d="M13.5 10l2.500 -1.200 2.500 1.200v2.600l-2.500 1.200-2.500-1.200z" fill="#d6d6d6" stroke="#8c8c8c" stroke-width=".7"/><path d="M11 14l2.500 -1.200 2.500 1.200v2.600l-2.500 1.200-2.500-1.200z" fill="#d6d6d6" stroke="#8c8c8c" stroke-width=".7"/></svg>
<div class="t" style="left:138.5px;top:679.7px;font-size:14.4px;color:#8e8e8e;font-weight:400;letter-spacing:-0.2px">PolarPattern</div>
<svg style="left:63px;top:707px" width="12" height="8" viewBox="0 0 12 8"><path d="M1 1.500l5 5 5-5" fill="none" stroke="#3a3a3a" stroke-width="1.900"/></svg>
<svg style="left:86.8px;top:704px" width="16" height="14" viewBox="0 0 16 14"><path d="M1.500 7c2-2.800 4.200-4 6.500-4s4.500 1.200 6.500 4c-2 2.800-4.200 4-6.500 4s-4.500-1.200-6.500-4z" fill="none" stroke="#5a5a5a" stroke-width="1.200"/><circle cx="8" cy="7" r="2" fill="none" stroke="#5a5a5a" stroke-width="1.100"/><path d="M2.500 1l11.500 12" stroke="#fff" stroke-width="2.800"/><path d="M2.800 1.200l11 11.800" stroke="#4a4a4a" stroke-width="1.300"/></svg>
<svg style="left:111.75px;top:701.25px" width="19.5" height="19.5" viewBox="0 0 20 20"><path d="M2 1.500l11.500 2.700 4.500-.7v13l-4.500 2-11.500-2.700z" fill="#b4b4b4" stroke="#8c8c8c" stroke-width="1.100"/><path d="M13.500 4.200v14.300l4.500-2v-13z" fill="#8c8c8c"/><ellipse cx="8" cy="10" rx="4.600" ry="6" fill="#d6d6d6" stroke="#6e6e6e" stroke-width="1"/><path d="M8.500 5c2.200 1 3 3 3 5s-.8 4-2.700 5c-1.300-1.500-2-3-2-5s.7-3.500 1.700-5z" fill="#f0f0f0"/></svg>
<div class="t" style="left:138.5px;top:703.7px;font-size:14.4px;color:#8e8e8e;font-weight:400;letter-spacing:-0.2px">Hole001</div>
<svg style="left:110.8px;top:728px" width="16" height="14" viewBox="0 0 16 14"><path d="M1.500 7c2-2.800 4.200-4 6.500-4s4.500 1.200 6.500 4c-2 2.800-4.200 4-6.500 4s-4.500-1.200-6.500-4z" fill="none" stroke="#5a5a5a" stroke-width="1.200"/><circle cx="8" cy="7" r="2" fill="none" stroke="#5a5a5a" stroke-width="1.100"/><path d="M2.500 1l11.500 12" stroke="#fff" stroke-width="2.800"/><path d="M2.800 1.200l11 11.800" stroke="#4a4a4a" stroke-width="1.300"/></svg>
<svg style="left:135.75px;top:725.25px" width="19.5" height="19.5" viewBox="0 0 20 20"><rect x="2" y="7" width="10.500" height="10.500" rx="1" fill="#fff" stroke="#8c8c8c" stroke-width="1.700"/><circle cx="12.500" cy="7.500" r="5.300" fill="#fff" fill-opacity=".0" stroke="#8c8c8c" stroke-width="1.700"/></svg>
<div class="t" style="left:162.5px;top:727.7px;font-size:14.4px;color:#8e8e8e;font-weight:400;letter-spacing:-0.2px">Sketch009</div>
<svg style="left:86.8px;top:752px" width="16" height="14" viewBox="0 0 16 14"><path d="M1.500 7c2-2.800 4.200-4 6.500-4s4.500 1.200 6.500 4c-2 2.800-4.200 4-6.500 4s-4.500-1.200-6.500-4z" fill="none" stroke="#5a5a5a" stroke-width="1.200"/><circle cx="8" cy="7" r="2" fill="none" stroke="#5a5a5a" stroke-width="1.100"/><path d="M2.500 1l11.500 12" stroke="#fff" stroke-width="2.800"/><path d="M2.800 1.200l11 11.800" stroke="#4a4a4a" stroke-width="1.300"/></svg>
<svg style="left:111.75px;top:749.25px" width="19.5" height="19.5" viewBox="0 0 20 20"><path d="M1.500 11l13-8.500 4 2.500v13.500h-17z" fill="#b4b4b4" stroke="#8c8c8c" stroke-width="1"/><path d="M6 7l2.500 -1.200 2.500 1.200v2.600l-2.500 1.200-2.500-1.200z" fill="#d6d6d6" stroke="#8c8c8c" stroke-width=".7"/><path d="M11 5l2.500 -1.200 2.500 1.200v2.600l-2.500 1.200-2.500-1.200z" fill="#d6d6d6" stroke="#8c8c8c" stroke-width=".7"/><path d="M3.5 11.5l2.500 -1.200 2.500 1.200v2.600l-2.500 1.200-2.500-1.200z" fill="#d6d6d6" stroke="#8c8c8c" stroke-width=".7"/><path d="M8.5 11.5l2.500 -1.200 2.500 1.200v2.600l-2.500 1.200-2.500-1.200z" fill="#d6d6d6" stroke="#8c8c8c" stroke-width=".7"/><path d="M13.5 10l2.500 -1.200 2.500 1.200v2.600l-2.500 1.200-2.500-1.200z" fill="#d6d6d6" stroke="#8c8c8c" stroke-width=".7"/><path d="M11 14l2.500 -1.200 2.500 1.200v2.600l-2.500 1.200-2.500-1.200z" fill="#d6d6d6" stroke="#8c8c8c" stroke-width=".7"/></svg>
<div class="t" style="left:138.5px;top:751.7px;font-size:14.4px;color:#8e8e8e;font-weight:400;letter-spacing:-0.2px">PolarPattern001</div>
<svg style="left:63px;top:779px" width="12" height="8" viewBox="0 0 12 8"><path d="M1 1.500l5 5 5-5" fill="none" stroke="#3a3a3a" stroke-width="1.900"/></svg>
<svg style="left:86.8px;top:776px" width="16" height="14" viewBox="0 0 16 14"><path d="M1.500 7c2-2.800 4.200-4 6.500-4s4.500 1.200 6.500 4c-2 2.800-4.200 4-6.500 4s-4.500-1.200-6.500-4z" fill="none" stroke="#5a5a5a" stroke-width="1.200"/><circle cx="8" cy="7" r="2" fill="none" stroke="#5a5a5a" stroke-width="1.100"/><path d="M2.500 1l11.500 12" stroke="#fff" stroke-width="2.800"/><path d="M2.800 1.200l11 11.800" stroke="#4a4a4a" stroke-width="1.300"/></svg>
<svg style="left:111.75px;top:773.25px" width="19.5" height="19.5" viewBox="0 0 20 20"><path d="M1.500 8l10-6 7 3.500v6.500l-10 6.500-7-3.500z" fill="#8c8c8c" stroke="#6e6e6e" stroke-width="1"/><path d="M1.500 8l7 3.500 10-6M8.500 11.500v7" fill="none" stroke="#6e6e6e" stroke-width=".8"/><path d="M1.500 8l10-6 7 3.500-10 6z" fill="#b4b4b4"/><path d="M6.500 7.800l5.500-3.300 3 1.500-5.500 3.500z" fill="#6e6e6e"/></svg>
<div class="t" style="left:138.5px;top:775.7px;font-size:14.4px;color:#8e8e8e;font-weight:400;letter-spacing:-0.2px">Pocket</div>
<svg style="left:110.8px;top:800px" width="16" height="14" viewBox="0 0 16 14"><path d="M1.500 7c2-2.800 4.200-4 6.500-4s4.500 1.200 6.500 4c-2 2.800-4.200 4-6.500 4s-4.500-1.200-6.500-4z" fill="none" stroke="#5a5a5a" stroke-width="1.200"/><circle cx="8" cy="7" r="2" fill="none" stroke="#5a5a5a" stroke-width="1.100"/><path d="M2.500 1l11.500 12" stroke="#fff" stroke-width="2.800"/><path d="M2.800 1.200l11 11.800" stroke="#4a4a4a" stroke-width="1.300"/></svg>
<svg style="left:135.75px;top:797.25px" width="19.5" height="19.5" viewBox="0 0 20 20"><rect x="2" y="7" width="10.500" height="10.500" rx="1" fill="#fff" stroke="#8c8c8c" stroke-width="1.700"/><circle cx="12.500" cy="7.500" r="5.300" fill="#fff" fill-opacity=".0" stroke="#8c8c8c" stroke-width="1.700"/></svg>
<div class="t" style="left:162.5px;top:799.7px;font-size:14.4px;color:#8e8e8e;font-weight:400;letter-spacing:-0.2px">Sketch010</div>
<svg style="left:86px;top:825.5px" width="16" height="11" viewBox="0 0 16 11"><path d="M1 5.500c2-3 4.500-4.500 7-4.500s5 1.500 7 4.500c-2 3-4.500 4.500-7 4.500s-5-1.500-7-4.500z" fill="#fff" stroke="#111" stroke-width="1.500"/><circle cx="8" cy="5.500" r="2.700" fill="#111"/><circle cx="9.200" cy="4.600" r=".9" fill="#fff"/></svg>
<svg style="left:111.75px;top:821.25px" width="19.5" height="19.5" viewBox="0 0 20 20"><path d="M1.500 10l3-6 4 2 4-4 6 2.500v14h-17z" fill="#4f86c6" stroke="#1d3f6e" stroke-width="1"/><path d="M3 7.500l3-3.500 3 2v6l-3 1.500-3-1.500z" fill="#2e5f9e"/><path d="M2 14.500h17v4h-17z" fill="#d24a4a"/><circle cx="13.500" cy="13.500" r="5.500" fill="#3fb52e" stroke="#1f7a14" stroke-width=".8"/><path d="M13.500 10v6M10.800 14l2.700 3 2.700-3" fill="none" stroke="#fff" stroke-width="2"/></svg>
<div class="t" style="left:138.5px;top:823.7px;font-size:14.4px;color:#000;font-weight:400;letter-spacing:-0.2px">Mirrored002</div>
<div class="a" style="left:9px;top:858px;width:339px;height:19px;background:#f0f0f0"></div>
<div class="a" style="left:30px;top:858px;width:242px;height:19px;background:#cdcdcd"></div>
<svg style="left:15px;top:862px" width="8" height="11" viewBox="0 0 8 11"><path d="M6.500 1l-5 4.500 5 4.500" fill="none" stroke="#333" stroke-width="2"/></svg>
<svg style="left:334px;top:862px" width="8" height="11" viewBox="0 0 8 11"><path d="M1.500 1l5 4.500-5 4.500" fill="none" stroke="#333" stroke-width="2"/></svg>
<div class="a" style="left:11px;top:887px;width:334px;height:87px;background:#fff;border:1px solid #828282"></div>
<div class="a" style="left:12px;top:954px;width:332px;height:19px;background:#f0f0f0"></div>
<div class="a" style="left:32px;top:954px;width:284px;height:19px;background:#cdcdcd"></div>
<svg style="left:17px;top:958px" width="8" height="11" viewBox="0 0 8 11"><path d="M6.500 1l-5 4.500 5 4.500" fill="none" stroke="#333" stroke-width="2"/></svg>
<svg style="left:329px;top:958px" width="8" height="11" viewBox="0 0 8 11"><path d="M1.500 1l5 4.500-5 4.500" fill="none" stroke="#333" stroke-width="2"/></svg>
<div class="a" style="left:11px;top:977px;width:51px;height:23px;background:#f0f0f0;border:1px solid #dadada;border-top:none"></div>
<div class="a" style="left:62px;top:976px;width:57px;height:26px;background:#fff"></div>
<div class="t" style="left:22px;top:982px;font-size:13.8px;color:#000;font-weight:400;letter-spacing:-0.5px">View</div>
<div class="t" style="left:76px;top:983px;font-size:13.8px;color:#000;font-weight:400;letter-spacing:-0.2px">Data</div>
<div class="a" style="left:354px;top:194px;width:965px;height:779px;background:#56577c"></div>
<svg style="left:0;top:0" width="1920" height="1080" viewBox="0 0 1920 1080"><path d="M1218 217 L1232 203 L1246 217 Z" fill="#a9a9c4" fill-opacity="0.62" stroke="#5f6088" stroke-width=".8"/><path d="M1218 345 L1232 359 L1246 345 Z" fill="#a9a9c4" fill-opacity="0.62" stroke="#5f6088" stroke-width=".8"/><path d="M1169 268 L1154 281 L1169 295 Z" fill="#a9a9c4" fill-opacity="0.62" stroke="#5f6088" stroke-width=".8"/><path d="M1296 268 L1311 281 L1296 295 Z" fill="#a9a9c4" fill-opacity="0.62" stroke="#5f6088" stroke-width=".8"/><circle cx="1301" cy="212" r="7.500" fill="#a9a9c4" fill-opacity="0.62" stroke="#5f6088" stroke-width=".8"/><path d="M1210 210 C1194 215 1184 222 1178 232 L1172 228 L1173 243 L1190 240 L1185 236 C1190 229 1199 223 1212 218 Z" fill="#a9a9c4" fill-opacity="0.62" stroke="#5f6088" stroke-width=".8"/><path d="M1254 210 C1270 215 1280 222 1286 232 L1292 228 L1291 243 L1274 240 L1279 236 C1274 229 1265 223 1252 218 Z" fill="#a9a9c4" fill-opacity="0.62" stroke="#5f6088" stroke-width=".8"/><path d="M1275 331 L1287 326 L1298 331 L1298 343 L1286 348 L1275 343 Z" fill="#a9a9c4" fill-opacity="0.62" stroke="#2f3052" stroke-width=".9"/><path d="M1275 331 L1286 336 L1298 331 M1286 336 L1286 348" fill="none" stroke="#2f3052" stroke-width=".9"/><path d="M1193.300 245 L1235 230.800 L1258.300 245 L1275 260 L1280.800 293.300 L1270.800 315 L1238.300 329.200 L1220 325 L1191.700 296.700 L1183.300 268.300 Z" fill="#9c9cba" fill-opacity=".8" stroke="#2f3052" stroke-width="1.200" stroke-linejoin="round"/><path d="M1193.300 252.500 L1235 232.500 L1258.300 245.800 L1226.700 262.500 Z" fill="#a2a2c0" fill-opacity=".5" stroke="#2f3052" stroke-width="1"/><path d="M1230 271.700 L1265 260 L1277.500 296.700 L1226.700 318.300 L1224.200 285 Z" fill="#a6a6c4" fill-opacity=".45" stroke="#2f3052" stroke-width="1"/><path d="M1186.700 261.700 L1210.800 266.700 L1226.700 262.500 M1226.700 262.500 L1263.300 256.700 L1275 260 M1210.800 266.700 L1206.700 275 L1212.500 285.800 L1224.200 285 M1226.700 262.500 L1230 271.700 M1183.300 268.300 L1206.700 275 M1212.500 285.800 L1218.300 318.300 L1226.700 318.300 M1218.300 318.300 L1220 325 M1226.700 318.300 L1238.300 329.200 M1277.500 296.700 L1280.800 293.300 M1186.700 261.700 L1193.300 252.500" fill="none" stroke="#2f3052" stroke-width="1"/><path d="M1173 267 L1183 318" stroke="#3434c8" stroke-width="2.600"/><path d="M1183 318 L1228 300" stroke="#4fd46a" stroke-opacity=".85" stroke-width="2.400"/><path d="M1184 320 L1215 337" stroke="#c8344c" stroke-width="2.600"/><text x="1231" y="304" font-family="Liberation Sans, sans-serif" font-size="12" font-weight="400" fill="#4a4b70" transform="rotate(-19 1231 304)" letter-spacing=".3">RIGHT</text><text x="1188" y="279" font-family="Liberation Sans, sans-serif" font-size="6.500" fill="#4a4b70" transform="rotate(40 1188 279)">FRONT</text><text x="1217" y="243" font-family="Liberation Sans, sans-serif" font-size="6.500" fill="#4a4b70" transform="rotate(22 1217 243)">TOP</text></svg>
<svg style="left:0;top:0" width="1920" height="1080" viewBox="0 0 1920 1080"><defs>
<linearGradient id="gv" gradientUnits="userSpaceOnUse" x1="810" y1="430" x2="885" y2="415"><stop offset="0" stop-color="#c9c9c9"/><stop offset=".22" stop-color="#f4f4f4"/><stop offset=".55" stop-color="#ffffff"/><stop offset=".8" stop-color="#dedede"/><stop offset="1" stop-color="#a9a9a9"/></linearGradient>
<linearGradient id="gh" gradientUnits="userSpaceOnUse" x1="700" y1="600" x2="730" y2="672"><stop offset="0" stop-color="#f6f971"/><stop offset=".3" stop-color="#fdfee0"/><stop offset=".5" stop-color="#ffffff"/><stop offset=".78" stop-color="#fdfedd"/><stop offset="1" stop-color="#f2f66a"/></linearGradient>
<linearGradient id="gh2" gradientUnits="userSpaceOnUse" x1="640" y1="640" x2="668" y2="706"><stop offset="0" stop-color="#e8e8e8"/><stop offset=".45" stop-color="#ffffff"/><stop offset="1" stop-color="#cfcfcf"/></linearGradient>
<radialGradient id="gb" gradientUnits="userSpaceOnUse" cx="800" cy="500" r="140"><stop offset="0" stop-color="#b0b0b0"/><stop offset=".27" stop-color="#b4b4b4"/><stop offset=".36" stop-color="#e6e6e6"/><stop offset=".5" stop-color="#ffffff"/><stop offset=".66" stop-color="#f0f0f0"/><stop offset=".78" stop-color="#d6d6d6"/><stop offset=".9" stop-color="#b0b0b0"/><stop offset="1" stop-color="#969696"/></radialGradient>
<linearGradient id="gft" gradientUnits="userSpaceOnUse" x1="768" y1="350" x2="912" y2="330"><stop offset="0" stop-color="#bdbdbd"/><stop offset=".3" stop-color="#ffffff"/><stop offset=".6" stop-color="#f2f2f2"/><stop offset="1" stop-color="#b2b2b2"/></linearGradient>
<linearGradient id="gtop" gradientUnits="userSpaceOnUse" x1="770" y1="320" x2="905" y2="295"><stop offset="0" stop-color="#858585"/><stop offset="1" stop-color="#7a7a7a"/></linearGradient>
<linearGradient id="gfs" gradientUnits="userSpaceOnUse" x1="610" y1="615" x2="665" y2="745"><stop offset="0" stop-color="#9a9a9a"/><stop offset=".25" stop-color="#f0f0f0"/><stop offset=".5" stop-color="#ffffff"/><stop offset=".8" stop-color="#d0d0d0"/><stop offset="1" stop-color="#8a8a8a"/></linearGradient>
<linearGradient id="gff" gradientUnits="userSpaceOnUse" x1="580" y1="630" x2="635" y2="745"><stop offset="0" stop-color="#6a6a6a"/><stop offset="1" stop-color="#757575"/></linearGradient>
<linearGradient id="ghole" gradientUnits="userSpaceOnUse" x1="592" y1="680" x2="620" y2="690"><stop offset="0" stop-color="#ffffff"/><stop offset=".5" stop-color="#e0e0e0"/><stop offset="1" stop-color="#7e7e7e"/></linearGradient>
<linearGradient id="gth" gradientUnits="userSpaceOnUse" x1="810" y1="310" x2="862" y2="302"><stop offset="0" stop-color="#8c8c8c"/><stop offset=".45" stop-color="#ffffff"/><stop offset="1" stop-color="#bdbdbd"/></linearGradient>
<linearGradient id="gbs" gradientUnits="userSpaceOnUse" x1="630" y1="820" x2="822" y2="820"><stop offset="0" stop-color="#dcdcdc"/><stop offset=".1" stop-color="#ffffff"/><stop offset=".125" stop-color="#c4c4c4"/><stop offset=".54" stop-color="#b9b9b9"/><stop offset=".56" stop-color="#f0f0f0"/><stop offset=".75" stop-color="#ffffff"/><stop offset="1" stop-color="#b4b4b4"/></linearGradient>
<linearGradient id="gboss" gradientUnits="userSpaceOnUse" x1="740" y1="795" x2="783" y2="795"><stop offset="0" stop-color="#a8a8a8"/><stop offset=".4" stop-color="#ffffff"/><stop offset="1" stop-color="#a0a0a0"/></linearGradient>
</defs><path d="M613.600 753.300 L629 796 Q631 800.500 635 802.500 L649.700 808.200 L731.700 825.600 C757 828 785 818 806.700 806 C815 800 819 795 819 789.400 L791.400 742.200 C787 736 782 733.500 777.500 732.500 L749.700 727 L690 718 Z" fill="#727272" stroke="#0e0e0e" stroke-width="1.750" stroke-linejoin="round"/><path d="M629 796 Q631 800.500 635 802.500 L649.700 808.200 L731.700 825.600 C757 828 785 818 806.700 806 C815 800 819 795 819 789.400 L821.300 815.800 C820 822 816 827 812 829.700 C800 838 780 848 756.700 849.900 L735.800 847.800 L653.900 832.500 L635.800 822.800 Z" fill="url(#gbs)" stroke="#0e0e0e" stroke-width="1.750" stroke-linejoin="round"/><path d="M649.700 808.200L653.900 832.500M731.700 825.600L735.800 847.800" stroke="#0e0e0e" stroke-width="1.650" fill="none"/><path d="M613.600 753.300 L629 796 L635.800 822.800" stroke="#0e0e0e" stroke-width="2.600" fill="none"/><path d="M691.300 697.600 L701.700 675.500 L737.200 795 L708 778.300 Z" fill="#767676" stroke="#0e0e0e" stroke-width="1.550"/><path d="M667 742 L673.200 704 L690 785.300 L676 778.300 Z" fill="#6c6c6c" stroke="#0e0e0e" stroke-width="1.550"/><path d="M673.200 704 L691.300 697.600 L708 778.300 L690 785.300 Z" fill="#d6d6d6" stroke="#0e0e0e" stroke-width="1.550"/><path d="M723.700 662.600 L737 681 L747 728.300 L756.700 775.600 Z" fill="#c2c2c2" stroke="#0e0e0e" stroke-width="1.450"/><path d="M701.700 675.500 L723.700 662.600 L756.700 775.600 L737.200 795 Z" fill="#fbfbfb" stroke="#0e0e0e" stroke-width="1.650"/><path d="M644 752 C650 756 660 752 667 742 L666 730 L652 745 Z" fill="#f2f2f2" stroke="#0e0e0e" stroke-width="1.350"/><path d="M740.300 788 L741 800 C745 811 777 810 782.500 796 L782.500 784 Z" fill="url(#gboss)" stroke="#0e0e0e" stroke-width="1.650"/><ellipse cx="761.500" cy="786" rx="21.200" ry="10" transform="rotate(-7 761.500 786)" fill="#737373" stroke="#0e0e0e" stroke-width="1.650"/><ellipse cx="760.500" cy="786.300" rx="13.200" ry="5.800" transform="rotate(-7 760.500 786.300)" fill="#fdfdfd" stroke="#0e0e0e" stroke-width="1.650"/><path d="M748.500 789 C752 793.500 768 793 772.500 785.500" fill="none" stroke="#9a9a9a" stroke-width="1"/><path d="M754.500 782.500 L755.500 791.500" stroke="#0e0e0e" stroke-width="1.350"/><path d="M795.500 569 L639.200 635.500 L668.400 705 L826.700 635.500 C828 612 815 585 795.500 569 Z" fill="url(#gh)"/><path d="M795.500 569 L639.200 635.500" stroke="#eef25f" stroke-width="1.200"/><path d="M826.700 635.500 L700 690.500" stroke="#eef25f" stroke-width="1"/><path d="M665.200 685.500 L697.600 672.500 C700 680 700 690 696 697 L673 706.500 L668.400 705 Z" fill="#f8fb8e"/><path d="M825.500 615.500 L665.200 685.500" stroke="#0e0e0e" stroke-width="1.750" fill="none"/><path d="M795.500 569 C815 585 828 612 826.700 635.500" fill="none" stroke="#0e0e0e" stroke-width="1.850"/><path d="M697.600 672.500 C700 680 700 690 696 697" fill="none" stroke="#0e0e0e" stroke-width="1.550"/><path d="M833.300 495.600 C832 520 826 545 795.500 569 C815 585 828 612 826.700 635.500 C865 618 900 585 909 540 C912 518 910 498 907.800 480 C900 497 860 510 833.300 495.600 Z" fill="url(#gb)" stroke="#0e0e0e" stroke-width="1.850"/><path d="M891 496 C894 530 890 570 825.500 615.500" fill="none" stroke="#0e0e0e" stroke-width="1.750"/><path d="M807.500 352 L833.300 495.600 C860 510 900 497 907.800 480 L880 345 Z" fill="url(#gv)" stroke="#0e0e0e" stroke-width="1.850"/><path d="M862 348 L891 496" stroke="#0e0e0e" stroke-width="1.750" fill="none"/><path d="M764.200 318.600 L769.200 344.100 C775 362 810 372 846 367 C880 362 908 345 912.800 321.500 L907.800 296 Z" fill="url(#gft)" stroke="#0e0e0e" stroke-width="1.850" stroke-linejoin="round"/><ellipse cx="836" cy="307.300" rx="72.700" ry="33" transform="rotate(-8.300 836 307.300)" fill="url(#gtop)" stroke="#0e0e0e" stroke-width="1.950"/><ellipse cx="835.500" cy="307.800" rx="26.700" ry="13.300" transform="rotate(-8.300 835.500 307.800)" fill="url(#gth)" stroke="#0e0e0e" stroke-width="1.850"/><path d="M821.500 298 L826 319.500" stroke="#0e0e0e" stroke-width="1.650"/><ellipse cx="808.3" cy="291" rx="8.300" ry="4.400" transform="rotate(-8 808.3 291)" fill="#fbfbfb" stroke="#0e0e0e" stroke-width="1.650"/><ellipse cx="881" cy="287.8" rx="8.300" ry="4.400" transform="rotate(-8 881 287.8)" fill="#fbfbfb" stroke="#0e0e0e" stroke-width="1.650"/><ellipse cx="790" cy="327" rx="8.300" ry="4.400" transform="rotate(-8 790 327)" fill="#fbfbfb" stroke="#0e0e0e" stroke-width="1.650"/><ellipse cx="862" cy="324.4" rx="8.300" ry="4.400" transform="rotate(-8 862 324.4)" fill="#fbfbfb" stroke="#0e0e0e" stroke-width="1.650"/><path d="M784 327.500 q2 -3.500 5 -4.500 l1.500 8" fill="#8a8a8a" stroke="#0e0e0e" stroke-width=".9"/><ellipse cx="630" cy="683" rx="29" ry="71" transform="rotate(-22.800 630 683)" fill="url(#gfs)" stroke="#0e0e0e" stroke-width="1.750"/><path d="M578.400 625.200 L603.400 617.200 L656.600 748.800 L631.600 756.800 Z" fill="url(#gfs)"/><path d="M578.400 625.200 L603.400 617.200 M631.600 756.800 L656.600 748.800" stroke="#0e0e0e" stroke-width="1.750"/><ellipse cx="605" cy="691" rx="29" ry="71" transform="rotate(-22.800 605 691)" fill="url(#gff)" stroke="#0e0e0e" stroke-width="1.950"/><ellipse cx="605.200" cy="690.600" rx="10.500" ry="26.500" transform="rotate(-22.800 605.200 690.600)" fill="url(#ghole)" stroke="#0e0e0e" stroke-width="1.850"/><ellipse cx="596.8" cy="643.6" rx="3.800" ry="8.300" transform="rotate(-22.800 596.8 643.6)" fill="#fafafa" stroke="#0e0e0e" stroke-width="1.650"/><ellipse cx="579" cy="675.2" rx="3.800" ry="8.300" transform="rotate(-22.800 579 675.2)" fill="#fafafa" stroke="#0e0e0e" stroke-width="1.650"/><ellipse cx="633.6" cy="706.8" rx="3.800" ry="8.300" transform="rotate(-22.800 633.6 706.8)" fill="#fafafa" stroke="#0e0e0e" stroke-width="1.650"/><ellipse cx="615" cy="737.6" rx="3.800" ry="8.300" transform="rotate(-22.800 615 737.6)" fill="#fafafa" stroke="#0e0e0e" stroke-width="1.650"/></svg>
<div class="a" style="left:714px;top:544.5px;width:224.5px;height:33px;border:1.500px solid rgba(150,150,188,.6);background:rgba(125,126,168,.30)"></div>
<div class="a" style="left:716.5px;top:547px;width:219.5px;height:28px;border:1px solid rgba(150,150,185,.5)"></div>
<div class="t" style="left:724px;top:549px;font-size:24px;color:#3d3f70;font-weight:700;letter-spacing:1.450px;-webkit-text-stroke:1px #3d3f70;opacity:.66">Mechnexus.com</div>
<div class="a" style="left:688px;top:643.5px;width:22px;height:22px;border-radius:50%;background:#f0707c"></div>
<svg style="left:703.500px;top:654px" width="16" height="24" viewBox="0 0 16 24"><path d="M1 1 L1 17.500 L4.800 14 L8 21.500 L10.800 20.300 L7.600 13 L12.800 13 Z" fill="#fff" stroke="#000" stroke-width="1.200"/></svg>
<div class="a" style="left:354px;top:973px;width:965px;height:30px;background:#f0f0f0"></div>
<div class="a" style="left:354px;top:973px;width:965px;height:1px;background:#fbfbfb"></div>
<div class="a" style="left:355px;top:974px;width:325px;height:27.5px;background:#fff"></div>
<svg style="left:369px;top:978px" width="16" height="18" viewBox="0 0 20 22"><path d="M3 1.500h9.500l4.500 4.500v14.500h-14z" fill="#f6f6f6" stroke="#7a7a7a" stroke-width="1.200"/><path d="M12.500 1.500v4.500h4.500" fill="#ddd" stroke="#7a7a7a" stroke-width="1"/><path d="M5.500 12l4-2.300 4 1.700v5l-4 2.300-4-1.700z" fill="#3568b0" stroke="#1d3f6e" stroke-width=".9"/><path d="M8 9c0-2.300 2.200-3.400 4.400-2.800s3.300 2.200 2.800 3.900l-1.700 1.300-4-1.700z" fill="#e0242c" stroke="#8f0c12" stroke-width=".8"/></svg>
<div class="t" style="left:391px;top:981.5px;font-size:12.9px;color:#000;font-weight:400;letter-spacing:-0.100px">Model Bend Pipe with Flange in FreeCAD : 1</div>
<div class="a" style="left:649px;top:980px;width:15px;height:15px;background:#e9714c;border:1px solid #c9552f;border-radius:2.500px"></div>
<svg style="left:652px;top:983px" width="9" height="9" viewBox="0 0 9 9"><path d="M1 1l7 7M8 1l-7 7" stroke="#fff" stroke-width="2"/></svg>
<div class="a" style="left:8px;top:1003px;width:1311px;height:13px;background:#f0f0f0"></div>
<div class="a" style="left:998px;top:1004px;width:1px;height:11px;background:#c4c4c4"></div>
<div class="a" style="left:1003px;top:1004px;width:1px;height:11px;background:#c4c4c4"></div>
<div class="a" style="left:1017px;top:1004px;width:1px;height:11px;background:#c4c4c4"></div>
<div class="a" style="left:1123px;top:1004px;width:1px;height:11px;background:#c4c4c4"></div>
<div class="a" style="left:1296px;top:1004px;width:1px;height:11px;background:#c4c4c4"></div>
<div class="a" style="left:30px;top:1013.5px;width:2px;height:2px;background:#555"></div>
<div class="a" style="left:52px;top:1013.5px;width:2px;height:2px;background:#555"></div>
<div class="a" style="left:74px;top:1013.5px;width:2px;height:2px;background:#555"></div>
<div class="a" style="left:79px;top:1013.5px;width:2px;height:2px;background:#555"></div>
<div class="a" style="left:103px;top:1013.5px;width:2px;height:2px;background:#555"></div>
<div class="a" style="left:150px;top:1013.5px;width:2px;height:2px;background:#555"></div>
<div class="a" style="left:166px;top:1013.5px;width:2px;height:2px;background:#555"></div>
<div class="a" style="left:239px;top:1013.5px;width:2px;height:2px;background:#555"></div>
<div class="a" style="left:300px;top:1013.5px;width:2px;height:2px;background:#555"></div>
<div class="a" style="left:325px;top:1013.5px;width:2px;height:2px;background:#555"></div>
<div class="a" style="left:371px;top:1013.5px;width:2px;height:2px;background:#555"></div>
<div class="a" style="left:421px;top:1013.5px;width:2px;height:2px;background:#555"></div>
<div class="a" style="left:491px;top:1013.5px;width:2px;height:2px;background:#555"></div>
<div class="a" style="left:681px;top:1013.5px;width:2px;height:2px;background:#555"></div>
<div class="a" style="left:1040.5px;top:1012.5px;width:10px;height:3px;border:1.300px solid #444;border-bottom:none;border-radius:5px 5px 0 0"></div>
<div class="a" style="left:1319px;top:0px;width:601px;height:1016px;background:#1f1f1f"></div>
<div class="a" style="left:1916px;top:105px;width:2px;height:911px;background:#2c2c2c"></div>
<div class="a" style="left:1918px;top:105px;width:2px;height:911px;background:#0c0c0c"></div>
<div class="a" style="left:1323px;top:7px;width:79px;height:43px;background:#72b8f7;border-radius:5px"></div>
<svg style="left:1335px;top:18px" width="22" height="22" viewBox="0 0 22 22"><path d="M18 9.500v-5a2.500 2.500 0 0 0-2.500-2.500h-11a2.500 2.500 0 0 0-2.500 2.500v11a2.500 2.500 0 0 0 2.500 2.500h5.500" fill="none" stroke="#102a44" stroke-width="1.600"/><path d="M2.500 16l5-5.500c.7-.7 1.500-.7 2.200 0l1.800 1.800" fill="none" stroke="#102a44" stroke-width="1.500"/><circle cx="13.500" cy="6.500" r="1.500" fill="none" stroke="#102a44" stroke-width="1.300"/><path d="M10.500 21l1-4 7-7c1-1 2-1 2.800-.2s.8 1.800-.2 2.800l-7 7z" fill="#102a44"/></svg>
<div class="t" style="left:1364.8px;top:22px;font-size:14.5px;color:#0a1c30;font-weight:400;letter-spacing:-.1px;-webkit-text-stroke:.25px #0a1c30">Edit</div>
<svg style="left:1419px;top:17px" width="24" height="24" viewBox="0 0 24 24"><path d="M3.500 12a8.500 8.500 0 1 1 12 7.800" fill="none" stroke="#fff" stroke-width="1.600"/><path d="M15 14.500v5.800h5.800" fill="none" stroke="#fff" stroke-width="1.600"/><circle cx="12" cy="12" r="2" fill="none" stroke="#fff" stroke-width="1.500"/></svg>
<svg style="left:1472.3px;top:27.5px" width="21.4" height="4" viewBox="0 0 21.4 4"><circle cx="2.0" cy="2" r="1.4" fill="#fff"/><circle cx="10.7" cy="2" r="1.4" fill="#fff"/><circle cx="19.4" cy="2" r="1.4" fill="#fff"/></svg>
<div class="t" style="left:1582px;top:22px;font-size:14.2px;color:#fff;font-weight:400;letter-spacing:-.1px">Bend Pip...</div>
<svg style="left:1690.3px;top:27.5px" width="21.4" height="4" viewBox="0 0 21.4 4"><circle cx="2.0" cy="2" r="1.4" fill="#fff"/><circle cx="10.7" cy="2" r="1.4" fill="#fff"/><circle cx="19.4" cy="2" r="1.4" fill="#fff"/></svg>
<div class="a" style="left:1735px;top:10px;width:1px;height:38px;background:#383838"></div>
<div class="a" style="left:1766px;top:27.5px;width:12px;height:1.3px;background:#fff"></div>
<div class="a" style="left:1822px;top:6px;width:98px;height:99px;background:#33196f"></div>
<svg style="left:1822px;top:6px" width="98" height="99" viewBox="0 0 98 99"><path d="M21 21h16l7.500 20.500h-23.500zM76.500 21h-16l-6 20.500h22zM21 59h13.500v19h-13.500zM39 59h19l-5.500 14.500h-8zM63 59h13.500v19h-13.500z" fill="#f5d033"/></svg>
<div class="t" style="left:1825px;top:47px;font-size:17px;color:#f5d033;font-weight:700;letter-spacing:-.1px;text-shadow:0 0 1.500px #33196f,0 0 1.500px #33196f,1px 1px 0 #33196f,-1px -1px 0 #33196f,1px -1px 0 #33196f,-1px 1px 0 #33196f">Mechnexus</div>
<div class="a" style="left:1332px;top:200px;width:569px;height:628px;background:#c8c8c8"></div>
<div class="a" style="left:1342px;top:210px;width:543px;height:603px;background:#fff"></div>
<svg style="left:0;top:0;filter:blur(.45px)" width="1920" height="1080" viewBox="0 0 1920 1080"><path d="M1666 282 V304 C1666 320 1700 331 1738 331 C1776 331 1810 320 1810 304 V282" fill="#fff" stroke="#151515" stroke-width="2.200" stroke-linecap="round" stroke-linejoin="round"/><ellipse cx="1738" cy="282" rx="72" ry="25" fill="#fff" stroke="#151515" stroke-width="2.200" stroke-linecap="round" stroke-linejoin="round"/><ellipse cx="1738" cy="281" rx="26" ry="10" fill="none" stroke="#151515" stroke-width="2.200" stroke-linecap="round" stroke-linejoin="round"/><ellipse cx="1739" cy="284" rx="19" ry="6.500" stroke="#383838" stroke-width="1" fill="none"/><ellipse cx="1698" cy="268" rx="7.500" ry="3.800" fill="none" stroke="#151515" stroke-width="2.200" stroke-linecap="round" stroke-linejoin="round"/><ellipse cx="1698" cy="268" rx="3.500" ry="1.800" stroke="#383838" stroke-width="1" fill="none"/><ellipse cx="1776" cy="269" rx="7.500" ry="3.800" fill="none" stroke="#151515" stroke-width="2.200" stroke-linecap="round" stroke-linejoin="round"/><ellipse cx="1776" cy="269" rx="3.500" ry="1.800" stroke="#383838" stroke-width="1" fill="none"/><ellipse cx="1698" cy="297" rx="7.500" ry="3.800" fill="none" stroke="#151515" stroke-width="2.200" stroke-linecap="round" stroke-linejoin="round"/><ellipse cx="1698" cy="297" rx="3.500" ry="1.800" stroke="#383838" stroke-width="1" fill="none"/><ellipse cx="1777" cy="297" rx="7.500" ry="3.800" fill="none" stroke="#151515" stroke-width="2.200" stroke-linecap="round" stroke-linejoin="round"/><ellipse cx="1777" cy="297" rx="3.500" ry="1.800" stroke="#383838" stroke-width="1" fill="none"/><ellipse cx="1738" cy="282" rx="51" ry="17.500" stroke="#444" stroke-width="1" fill="none" stroke-dasharray="9 4"/><path d="M1702 330 C1704 380 1706 420 1702 436 C1697 460 1684 472 1660 484 L1553 533" fill="none" stroke="#151515" stroke-width="2.200" stroke-linecap="round" stroke-linejoin="round"/><path d="M1772 329 C1775 400 1778 440 1765 480 C1752 520 1728 540 1700 552 L1646 572" fill="none" stroke="#151515" stroke-width="2.200" stroke-linecap="round" stroke-linejoin="round"/><path d="M1737 230 V400 C1737 470 1715 505 1660 530 L1545 580" stroke="#444" stroke-width="1" fill="none" stroke-dasharray="16 4 3 4"/><path d="M1725 402 l26 12 M1745 398 l-14 22 M1667 522 l22 14 M1686 516 l-12 24" stroke="#383838" stroke-width="1" fill="none"/><path d="M1664 592 C1680 591 1693 594 1703 601 L1740 634 C1750 644 1753 652 1753 660 V678 C1752 690 1740 699 1722 703 C1700 707 1670 705 1640 701 C1600 696 1570 694 1556 691 C1540 686 1530 676 1522 667 L1507 647" fill="none" stroke="#151515" stroke-width="2.200" stroke-linecap="round" stroke-linejoin="round"/><path d="M1535 648 C1550 658 1570 663 1590 667 C1620 671 1650 673 1677 675.500 C1700 677 1725 675 1740 669 C1748 665 1752 662 1753 660" fill="none" stroke="#151515" stroke-width="2.200" stroke-linecap="round" stroke-linejoin="round"/><path d="M1584 601 L1611.600 587 L1614.800 567.700 L1633 559 L1669 637 L1652 646.500 L1616 634.800 L1598.800 647.500 L1579.700 639 L1579.700 626 L1598.800 596.500" fill="#fff" stroke="#151515" stroke-width="2.200" stroke-linecap="round" stroke-linejoin="round"/><path d="M1598.800 596.500 V647.500 M1614.800 567.700 L1616 634.800 M1614.800 567.700 L1652 646.500 M1645.700 572 L1661.600 567.700 L1664.800 620" fill="none" stroke="#151515" stroke-width="2.200" stroke-linecap="round" stroke-linejoin="round"/><ellipse cx="1528" cy="582" rx="54" ry="65" transform="rotate(-20 1528 582)" fill="#fff" stroke="#151515" stroke-width="2.200" stroke-linecap="round" stroke-linejoin="round"/><ellipse cx="1511" cy="587" rx="54" ry="65" transform="rotate(-20 1511 587)" fill="#fff" stroke="#151515" stroke-width="2.200" stroke-linecap="round" stroke-linejoin="round"/><ellipse cx="1508.400" cy="589" rx="20.500" ry="27" transform="rotate(-20 1508.400 589)" fill="none" stroke="#151515" stroke-width="2.200" stroke-linecap="round" stroke-linejoin="round"/><ellipse cx="1510" cy="588" rx="38" ry="46" transform="rotate(-20 1510 588)" stroke="#444" stroke-width="1" fill="none" stroke-dasharray="9 4"/><ellipse cx="1510.5" cy="546.4" rx="5.500" ry="7" transform="rotate(-20 1510.5 546.4)" fill="none" stroke="#151515" stroke-width="2.200" stroke-linecap="round" stroke-linejoin="round"/><ellipse cx="1510.5" cy="546.4" rx="2.800" ry="3.800" transform="rotate(-20 1510.5 546.4)" stroke="#383838" stroke-width="1" fill="none"/><ellipse cx="1470" cy="574" rx="5.500" ry="7" transform="rotate(-20 1470 574)" fill="none" stroke="#151515" stroke-width="2.200" stroke-linecap="round" stroke-linejoin="round"/><ellipse cx="1470" cy="574" rx="2.800" ry="3.800" transform="rotate(-20 1470 574)" stroke="#383838" stroke-width="1" fill="none"/><ellipse cx="1552" cy="606" rx="5.500" ry="7" transform="rotate(-20 1552 606)" fill="none" stroke="#151515" stroke-width="2.200" stroke-linecap="round" stroke-linejoin="round"/><ellipse cx="1552" cy="606" rx="2.800" ry="3.800" transform="rotate(-20 1552 606)" stroke="#383838" stroke-width="1" fill="none"/><ellipse cx="1511.5" cy="635.8" rx="5.500" ry="7" transform="rotate(-20 1511.5 635.8)" fill="none" stroke="#151515" stroke-width="2.200" stroke-linecap="round" stroke-linejoin="round"/><ellipse cx="1511.5" cy="635.8" rx="2.800" ry="3.800" transform="rotate(-20 1511.5 635.8)" stroke="#383838" stroke-width="1" fill="none"/><path d="M1466 540 L1540 628 M1435 590 L1560 588 M1492 640 L1518 548 M1484 610 l46 -40 M1480 570 l58 34 M1476 600 l64 -20" stroke="#383838" stroke-width="1" fill="none"/><path d="M1556 538 C1553 548 1554 556 1560 562" fill="none" stroke="#151515" stroke-width="2.200" stroke-linecap="round" stroke-linejoin="round"/><path d="M1673.300 645 V655 C1673.300 662 1688 667 1702 667 C1716 667 1730.700 662 1730.700 655 V645" fill="#fff" stroke="#151515" stroke-width="2.200" stroke-linecap="round" stroke-linejoin="round"/><ellipse cx="1702" cy="644.800" rx="28.700" ry="11.500" fill="#fff" stroke="#151515" stroke-width="2.200" stroke-linecap="round" stroke-linejoin="round"/><ellipse cx="1702" cy="644.800" rx="11" ry="4.300" fill="none" stroke="#151515" stroke-width="2.200" stroke-linecap="round" stroke-linejoin="round"/><ellipse cx="1702" cy="644.800" rx="17" ry="6.500" stroke="#383838" stroke-width="1" fill="none"/><path d="M1379 425 L1658 308 M1379 425 V788 M1373 425 H1385 M1373 788 H1385 M1394 643 V777 M1388 643 L1470 610 M1378 790 L1600 676 M1394 778 L1520 712 M1401 662 L1548 729 M1443 664 L1549 708 M1401 662 L1500 617 M1443 664 L1530 622 M1548 729 L1700 650 M1549 708 L1680 640 M1588 700 V764 M1590 748 L1665 708 M1590 730 L1650 698 M1496 494 L1672 423 M1508 490 V530 M1534 480 V540 M1588 456 V570 M1672 423 V530 M1662 444 L1740 470 M1690 460 L1735 478 M1700 236 L1782 318 M1650 265 L1700 272 M1642 291 L1668 298 M1790 256 L1840 262 M1795 300 L1860 330 M1800 320 L1855 345 M1855 305 V362 M1433 588 L1470 588 M1455 525 L1480 560 M1700 672 L1748 678 M1703 601 L1755 590 M1728 634 L1762 625 M1738 644 L1782 644 M1754.800 652.600 L1804.800 700.700 M1729 675 H1832.600 M1832.600 680 C1830 690 1818 697 1804.800 699 M1590 615 L1640 595 M1630 605 L1660 592 M1580 560 L1625 555 M1596 656 l40 12" stroke="#383838" stroke-width="1" fill="none"/><circle cx="1379" cy="429" r="1.700" fill="#151515"/><circle cx="1379" cy="784" r="1.700" fill="#151515"/><circle cx="1394" cy="647" r="1.700" fill="#151515"/><circle cx="1394" cy="773" r="1.700" fill="#151515"/><circle cx="1588" cy="704" r="1.700" fill="#151515"/><circle cx="1588" cy="760" r="1.700" fill="#151515"/><circle cx="1855" cy="309" r="1.700" fill="#151515"/><circle cx="1855" cy="358" r="1.700" fill="#151515"/><circle cx="1497" cy="494" r="1.700" fill="#151515"/><circle cx="1534" cy="479" r="1.700" fill="#151515"/><circle cx="1588" cy="457" r="1.700" fill="#151515"/><circle cx="1671" cy="424" r="1.700" fill="#151515"/><circle cx="1404" cy="663" r="1.700" fill="#151515"/><circle cx="1446" cy="665" r="1.700" fill="#151515"/><circle cx="1545" cy="727" r="1.700" fill="#151515"/><circle cx="1546" cy="707" r="1.700" fill="#151515"/><path d="M1698 282L1710 282 M1763 281L1777 280 M1794 289L1803 290 M1679 272L1686 273 M1679 295L1691 297 M1710 297L1719 297 M1713 255L1717 259 M1767 306L1771 310 M1462 541L1468 548 M1548 628L1554 634 M1487 607L1491 600 M1528 572L1532 566 M1468 588L1476 588 M1545 587L1553 587 M1519 548L1527 546 M1492 545L1500 547 M1581 615L1590 612 M1625 600L1634 597 M1596 612L1604 609 M1650 590L1658 587 M1716 600L1724 598 M1736 634L1744 632 M1752 652L1758 657 M1800 698L1806 700 M1830 678L1832 684 M1496 494L1504 491 M1526 482L1534 479 M1538 478L1546 475 M1580 460L1588 457 M1592 456L1600 453 M1664 427L1672 424 M1730 468L1738 470 M1401 662L1408 665 M1443 664L1450 667 M1540 726L1548 729 M1541 705L1549 708 M1379 425L1379 434 M1379 788L1379 779 M1394 643L1394 652 M1394 777L1394 768 M1588 700L1588 708 M1588 764L1588 756 M1588 728L1588 736 M1855 305L1855 314 M1855 362L1855 353" stroke="#111" stroke-width="2.300" stroke-linecap="round" fill="none"/><text x="1376" y="612" font-family="Liberation Sans, sans-serif" font-style="italic" font-size="9.5" fill="#222" stroke="#222" stroke-width=".25" transform="rotate(-90 1376 612)">360</text><text x="1391" y="722" font-family="Liberation Sans, sans-serif" font-style="italic" font-size="9.5" fill="#222" stroke="#222" stroke-width=".25" transform="rotate(-90 1391 722)">135</text><text x="1585" y="722" font-family="Liberation Sans, sans-serif" font-style="italic" font-size="9.5" fill="#222" stroke="#222" stroke-width=".25" transform="rotate(-90 1585 722)">12</text><text x="1585" y="748" font-family="Liberation Sans, sans-serif" font-style="italic" font-size="9.5" fill="#222" stroke="#222" stroke-width=".25" transform="rotate(-90 1585 748)">25</text><text x="1616" y="435" font-family="Liberation Sans, sans-serif" font-style="italic" font-size="9.5" fill="#222" stroke="#222" stroke-width=".25" transform="rotate(-15 1616 435)">90</text><text x="1547" y="464" font-family="Liberation Sans, sans-serif" font-style="italic" font-size="9.5" fill="#222" stroke="#222" stroke-width=".25" transform="rotate(-15 1547 464)">60</text><text x="1508" y="480" font-family="Liberation Sans, sans-serif" font-style="italic" font-size="9.5" fill="#222" stroke="#222" stroke-width=".25" transform="rotate(-15 1508 480)">25</text><text x="1703" y="447" font-family="Liberation Sans, sans-serif" font-style="italic" font-size="9.5" fill="#222" stroke="#222" stroke-width=".25" transform="rotate(10 1703 447)">80</text><text x="1648" y="266" font-family="Liberation Sans, sans-serif" font-style="italic" font-size="9.5" fill="#222" stroke="#222" stroke-width=".25" transform="rotate(10 1648 266)">120</text><text x="1642" y="290" font-family="Liberation Sans, sans-serif" font-style="italic" font-size="9.5" fill="#222" stroke="#222" stroke-width=".25" transform="rotate(5 1642 290)">15</text><text x="1812" y="275" font-family="Liberation Sans, sans-serif" font-style="italic" font-size="9.5" fill="#222" stroke="#222" stroke-width=".25" transform="rotate(5 1812 275)">45</text><text x="1849" y="338" font-family="Liberation Sans, sans-serif" font-style="italic" font-size="9.5" fill="#222" stroke="#222" stroke-width=".25" transform="rotate(-80 1849 338)">25</text><text x="1700" y="243" font-family="Liberation Sans, sans-serif" font-style="italic" font-size="9.5" fill="#222" stroke="#222" stroke-width=".25" transform="rotate(50 1700 243)">18</text><text x="1436" y="586" font-family="Liberation Sans, sans-serif" font-style="italic" font-size="9.5" fill="#222" stroke="#222" stroke-width=".25" transform="rotate(0 1436 586)">120</text><text x="1460" y="530" font-family="Liberation Sans, sans-serif" font-style="italic" font-size="9.5" fill="#222" stroke="#222" stroke-width=".25" transform="rotate(50 1460 530)">18</text><text x="1615" y="555" font-family="Liberation Sans, sans-serif" font-style="italic" font-size="9.5" fill="#222" stroke="#222" stroke-width=".25" transform="rotate(0 1615 555)">64</text><text x="1600" y="612" font-family="Liberation Sans, sans-serif" font-style="italic" font-size="9.5" fill="#222" stroke="#222" stroke-width=".25" transform="rotate(-15 1600 612)">20</text><text x="1634" y="602" font-family="Liberation Sans, sans-serif" font-style="italic" font-size="9.5" fill="#222" stroke="#222" stroke-width=".25" transform="rotate(-15 1634 602)">24</text><text x="1722" y="593" font-family="Liberation Sans, sans-serif" font-style="italic" font-size="9.5" fill="#222" stroke="#222" stroke-width=".25" transform="rotate(-8 1722 593)">R45</text><text x="1742" y="628" font-family="Liberation Sans, sans-serif" font-style="italic" font-size="9.5" fill="#222" stroke="#222" stroke-width=".25" transform="rotate(-8 1742 628)">36</text><text x="1760" y="643" font-family="Liberation Sans, sans-serif" font-style="italic" font-size="9.5" fill="#222" stroke="#222" stroke-width=".25" transform="rotate(0 1760 643)">24</text><text x="1735" y="660" font-family="Liberation Sans, sans-serif" font-style="italic" font-size="9.5" fill="#222" stroke="#222" stroke-width=".25" transform="rotate(0 1735 660)">45</text><text x="1812" y="695" font-family="Liberation Sans, sans-serif" font-style="italic" font-size="9.5" fill="#222" stroke="#222" stroke-width=".25" transform="rotate(-40 1812 695)">45</text><text x="1497" y="684" font-family="Liberation Sans, sans-serif" font-style="italic" font-size="9.5" fill="#222" stroke="#222" stroke-width=".25" transform="rotate(25 1497 684)">114</text><text x="1478" y="700" font-family="Liberation Sans, sans-serif" font-style="italic" font-size="9.5" fill="#222" stroke="#222" stroke-width=".25" transform="rotate(25 1478 700)">165</text><text x="1572" y="655" font-family="Liberation Sans, sans-serif" font-style="italic" font-size="9.5" fill="#222" stroke="#222" stroke-width=".25" transform="rotate(20 1572 655)">20</text><path d="M1578 800h10M1624 801h2M1633 801h2M1642 801h2M1651 801h2M1657 800v2" stroke="#333" stroke-width="1.200"/><circle cx="1770" cy="542" r="1" fill="#d02040"/></svg>
<div class="a" style="left:1319px;top:972px;width:601px;height:44px;background:#222222"></div>
<svg style="left:1337.5px;top:990.5px" width="20" height="20" viewBox="0 0 20 20"><rect x="1" y="3.500" width="18" height="12.500" rx="2.500" fill="none" stroke="#f2f2f2" stroke-width="1.500"/><path d="M1.500 11.500h17" stroke="#f2f2f2" stroke-width="1.300"/><path d="M4 14h2M7.500 14h2M11 14h2M14.500 14h2" stroke="#f2f2f2" stroke-width="1.600"/></svg>
<div class="a" style="left:1384.5px;top:980px;width:1px;height:36px;background:#343434"></div>
<svg style="left:1408.5px;top:991.5px" width="20" height="18" viewBox="0 0 20 18"><path d="M10 16.500l-7-7c-1.800-1.800-1.800-4.500 0-6.200s4.300-1.600 6 .2l1 1.200 1-1.200c1.700-1.800 4.200-1.900 6-.2s1.800 4.400 0 6.200z" fill="none" stroke="#6e6e6e" stroke-width="1.400"/></svg>
<svg style="left:1460.5px;top:990.5px" width="20" height="20" viewBox="0 0 20 20"><circle cx="10" cy="10" r="8.700" fill="none" stroke="#f2f2f2" stroke-width="1.500"/><path d="M10 8.500v6.500" stroke="#f2f2f2" stroke-width="1.600"/><circle cx="10" cy="5.800" r="1" fill="#f2f2f2"/></svg>
<svg style="left:1513.0px;top:1000px" width="21.4" height="4" viewBox="0 0 21.4 4"><circle cx="2.0" cy="2" r="1.4" fill="#fff"/><circle cx="10.7" cy="2" r="1.4" fill="#fff"/><circle cx="19.4" cy="2" r="1.4" fill="#fff"/></svg>
<svg style="left:1580px;top:991px" width="20" height="20" viewBox="0 0 20 20"><path d="M1 6v-2.500a2.500 2.500 0 0 1 2.500-2.500h2.500M14 1h2.500a2.500 2.500 0 0 1 2.500 2.500v2.500M19 14v2.500a2.500 2.500 0 0 1-2.500 2.500h-2.500M6 19h-2.500a2.500 2.500 0 0 1-2.500-2.500v-2.500" fill="none" stroke="#f2f2f2" stroke-width="1.500"/><circle cx="10" cy="10" r="2.200" fill="none" stroke="#f2f2f2" stroke-width="1.500"/></svg>
<svg style="left:1633px;top:991px" width="20" height="20" viewBox="0 0 20 20"><path d="M1 6v-2.500a2.500 2.500 0 0 1 2.500-2.500h2.500M14 1h2.500a2.500 2.500 0 0 1 2.500 2.500v2.500M19 14v2.500a2.500 2.500 0 0 1-2.500 2.500h-2.500M6 19h-2.500a2.500 2.500 0 0 1-2.500-2.500v-2.500" fill="none" stroke="#f2f2f2" stroke-width="1.500"/><path d="M4.500 6.500h11M4.500 10h11M4.500 13.500h7" stroke="#f2f2f2" stroke-width="1.500"/></svg>
<svg style="left:1751px;top:992px" width="20" height="17" viewBox="0 0 20 17"><rect x=".800" y=".800" width="18.400" height="15.400" rx="1" fill="none" stroke="#f2f2f2" stroke-width="1.400"/><path d="M4 7v-3h3.500M12.500 4h3.500v3M16 10v3h-3.500M7.500 13h-3.500v-3" fill="none" stroke="#f2f2f2" stroke-width="1.400"/></svg>
<svg style="left:1803.3px;top:1000px" width="21.4" height="4" viewBox="0 0 21.4 4"><circle cx="2.0" cy="2" r="1.4" fill="#fff"/><circle cx="10.7" cy="2" r="1.4" fill="#fff"/><circle cx="19.4" cy="2" r="1.4" fill="#fff"/></svg>
<div class="a" style="left:1848px;top:980px;width:1px;height:36px;background:#343434"></div>
<svg style="left:1876px;top:991px" width="19" height="19" viewBox="0 0 19 19"><path d="M2 17l15-15M10.500 1.500h7v7M1.500 10.500v7h7" fill="none" stroke="#f2f2f2" stroke-width="1.500"/></svg>
<div class="a" style="left:0px;top:1015px;width:1920px;height:65px;background:#fff"></div>
<div class="a" style="left:4px;top:1020px;width:609px;height:53px;background:#fff;border:2px solid #5f7fb2;border-radius:9px;box-shadow:0 0 2px rgba(60,90,150,.6)"></div>
<div class="t" style="left:16.5px;top:1032.2px;font-size:30px;color:#2f5496;font-weight:700;letter-spacing:.900px">If you like what I do please support me</div>
<div class="a" style="left:623px;top:1018px;width:352px;height:55px;background:linear-gradient(90deg,#14eef5 0%,#12c6f5 11%,#10a5f5 27%,#1489f4 55%,#1565ee 100%);border-radius:9px"></div>
<svg style="left:630px;top:1025px" width="60" height="42" viewBox="0 0 60 42"><path d="M6.300 3.700H43A12.200 12.200 0 0 1 43 28H41.300V31.300A6 6 0 0 1 35.300 37.300H10.300A6 6 0 0 1 4.300 31.300V5.700A2 2 0 0 1 6.300 3.700Z" fill="#fff" stroke="#0c2029" stroke-width="3.200" stroke-linejoin="round"/><path d="M41.300 9.800H43.500A6 6 0 0 1 43.500 21.800H41.300Z" fill="#12b2f5" stroke="#0c2029" stroke-width="2.800" stroke-linejoin="round"/><path d="M23.500 30L14 20.300C11.500 17.700 11.800 14.200 14.200 12.500 16.800 10.700 20.500 11.500 23.500 15.200 26.500 11.500 30.200 10.700 32.800 12.500 35.200 14.200 35.500 17.700 33 20.300Z" fill="#f0485f"/></svg>
<div class="t" style="left:705px;top:1031.2px;font-size:26px;color:#fff;font-weight:700;letter-spacing:0px">Support me on Ko-fi</div>
<div class="a" style="left:989px;top:1020px;width:308px;height:54px;background:#fff;border:2px solid #5d8cb5;border-radius:9px;box-shadow:0 0 2px rgba(60,110,160,.6)"></div>
<div class="t" style="left:1003px;top:1035px;font-size:26px;color:#3e7cb6;font-weight:700;letter-spacing:.420px">Ko-fi.com/mechnexus</div>
<div class="a" style="left:1308px;top:1017px;width:245px;height:59px;background:linear-gradient(180deg,#dc4a30 0%,#d23e26 60%,#c2361f 100%);border-radius:8px;box-shadow:0 1px 2px rgba(120,30,10,.7)"></div>
<svg style="left:1322px;top:1034px" width="30" height="28" viewBox="0 0 30 28"><path d="M3.500 27v-14a11 11 0 1 1 11 11h-3" fill="none" stroke="#fff" stroke-width="3.600"/><path d="M10 27v-13.500a5 5 0 1 1 5 5h-2" fill="none" stroke="#fff" stroke-width="3.200"/></svg>
<div class="t" style="left:1366px;top:1037px;font-size:22px;color:#fff;font-weight:700;letter-spacing:-.560px">Become a patron</div>
<div class="a" style="left:1564px;top:1019px;width:348px;height:54px;background:#fff;border:2px solid #4f89be;border-radius:9px;box-shadow:0 0 2px rgba(60,110,170,.6)"></div>
<div class="t" style="left:1578px;top:1034px;font-size:27px;color:#3a80c2;font-weight:700;letter-spacing:.090px">patreon.com/mechnexus</div>
</body></html>
